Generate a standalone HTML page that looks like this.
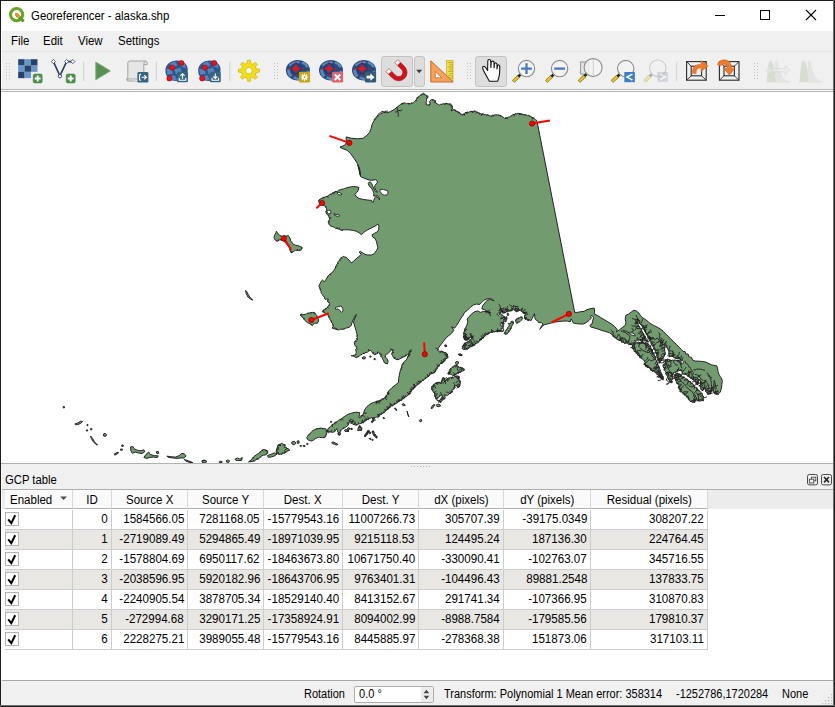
<!DOCTYPE html>
<html><head><meta charset="utf-8"><title>Georeferencer - alaska.shp</title>
<style>
*{box-sizing:border-box;margin:0;padding:0}
html,body{width:835px;height:707px;overflow:hidden;background:#fff}
body{position:relative;font-family:"Liberation Sans",sans-serif;font-size:12px;color:#000}
.abs{position:absolute}
#win{position:absolute;left:0;top:0;width:835px;height:707px;background:#f0f0f0;overflow:hidden}
#bT{left:0;top:0;width:835px;height:1px;background:#1c1c1c}
#bL{left:0;top:0;width:1px;height:707px;background:#1c1c1c}
#bR{left:833px;top:0;width:2px;height:707px;background:linear-gradient(90deg,#6e6e6e 0,#6e6e6e 40%,#1c1c1c 40%)}
#bB{left:0;top:705px;width:835px;height:2px;background:linear-gradient(180deg,#6e6e6e 0,#6e6e6e 40%,#1c1c1c 40%)}
#title{left:1px;top:1px;width:833px;height:30px;background:#fff}
#title .t{left:30px;top:8px;font-size:12px;white-space:nowrap;transform:scaleX(.951);transform-origin:0 50%}
#menu{left:2px;top:31px;width:832px;height:20px;background:#f0f0f0}
#menu span{position:absolute;margin-left:-1px;top:3px;font-size:12px;white-space:nowrap;transform:scaleX(.955);transform-origin:0 50%}
#tb{left:2px;top:51px;width:832px;height:39px;background:#f0f0f0;border-top:1px solid #e3e3e3}
#tbline{left:1px;top:89px;width:833px;height:3px;background:#fff;border-top:1px solid #b5b5b5;border-bottom:1px solid #b5b5b5}
#canvas{left:1px;top:92px;width:833px;height:372px;background:#fff;border-bottom:1px solid #b2b2b2}
#svgmap{position:absolute;left:0;top:0}
#split{left:1px;top:464px;width:833px;height:6px;background:#f0f0f0}
#docktitle{left:5px;top:473px;font-size:12px;white-space:nowrap;transform:scaleX(.94);transform-origin:0 50%}
#tbl{left:2px;top:489px;width:832px;height:192px;background:#fff;border-top:1px solid #b0b0b0;border-bottom:1px solid #a8a8a8}
#hdrbg{left:2px;top:490px;width:832px;height:19px;background:#ececec}
.hc{position:absolute;top:490px;height:19px;background:#fafafa;border-right:1px solid #d8d8d8;border-bottom:1px solid #b4b4b4;text-align:center;line-height:21px;font-size:12px;white-space:nowrap}
.hc span{display:inline-block;transform:scaleX(.96);transform-origin:50% 50%}
.row{position:absolute;left:5px;width:703px;height:20px;border-bottom:1px solid #cdcdcd}
.row.alt{background:#e9e7e3}
.c{position:absolute;top:0;height:19px;border-right:1px solid #cdcdcd;text-align:right;padding-right:3px;line-height:19px;font-size:12px;white-space:nowrap}
.c span{display:inline-block;transform:scaleX(.965);transform-origin:100% 50%}
.cb{position:absolute;left:0px;top:2px;width:14px;height:14px;border:1px solid #b5b5b5;background:#fff}
#status{left:1px;top:681px;width:833px;height:24px;background:#f0f0f0}
#status span{position:absolute;top:6px;font-size:12px;white-space:nowrap;transform:scaleX(.915);transform-origin:0 50%}
#spin{left:354px;top:686px;width:80px;height:17px;background:#fff;border:1px solid #adadad;border-radius:2px}
</style></head><body>
<div id="win">
<div class="abs" style="left:1px;top:1px;width:1px;height:704px;background:#fff"></div>
<div id="title" class="abs"><span class="abs t">Georeferencer - alaska.shp</span></div>
<div id="menu" class="abs"><span style="left:10px">File</span><span style="left:42px">Edit</span><span style="left:77px">View</span><span style="left:117px">Settings</span></div>
<div id="tb" class="abs"></div>
<div id="tbline" class="abs"></div>
<div id="canvas" class="abs"></div>
<div id="split" class="abs"></div>
<div id="docktitle" class="abs">GCP table</div>
<div id="tbl" class="abs"></div>
<div id="hdrbg" class="abs"></div>
<div class="hc" style="left:5px;width:68px;text-align:left;padding-left:5px"><span style="transform-origin:0 50%">Enabled</span></div>
<div class="hc" style="left:73px;width:39px"><span>ID</span></div>
<div class="hc" style="left:112px;width:76px"><span>Source X</span></div>
<div class="hc" style="left:188px;width:76px"><span>Source Y</span></div>
<div class="hc" style="left:264px;width:79px"><span>Dest. X</span></div>
<div class="hc" style="left:343px;width:76px"><span>Dest. Y</span></div>
<div class="hc" style="left:419px;width:85px"><span>dX (pixels)</span></div>
<div class="hc" style="left:504px;width:87px"><span>dY (pixels)</span></div>
<div class="hc" style="left:591px;width:117px"><span>Residual (pixels)</span></div>
<div class="row" style="top:510px"><div class="c" style="left:0;width:68px"><div class="cb"></div></div><div class="c" style="left:68px;width:39px"><span>0</span></div><div class="c" style="left:107px;width:76px"><span>1584566.05</span></div><div class="c" style="left:183px;width:76px"><span>7281168.05</span></div><div class="c" style="left:259px;width:79px"><span>-15779543.16</span></div><div class="c" style="left:338px;width:76px"><span>11007266.73</span></div><div class="c" style="left:414px;width:85px"><span>305707.39</span></div><div class="c" style="left:499px;width:87px"><span>-39175.0349</span></div><div class="c" style="left:586px;width:117px"><span>308207.22</span></div></div>
<div class="row alt" style="top:530px"><div class="c" style="left:0;width:68px"><div class="cb"></div></div><div class="c" style="left:68px;width:39px"><span>1</span></div><div class="c" style="left:107px;width:76px"><span>-2719089.49</span></div><div class="c" style="left:183px;width:76px"><span>5294865.49</span></div><div class="c" style="left:259px;width:79px"><span>-18971039.95</span></div><div class="c" style="left:338px;width:76px"><span>9215118.53</span></div><div class="c" style="left:414px;width:85px"><span>124495.24</span></div><div class="c" style="left:499px;width:87px"><span>187136.30</span></div><div class="c" style="left:586px;width:117px"><span>224764.45</span></div></div>
<div class="row" style="top:550px"><div class="c" style="left:0;width:68px"><div class="cb"></div></div><div class="c" style="left:68px;width:39px"><span>2</span></div><div class="c" style="left:107px;width:76px"><span>-1578804.69</span></div><div class="c" style="left:183px;width:76px"><span>6950117.62</span></div><div class="c" style="left:259px;width:79px"><span>-18463673.80</span></div><div class="c" style="left:338px;width:76px"><span>10671750.40</span></div><div class="c" style="left:414px;width:85px"><span>-330090.41</span></div><div class="c" style="left:499px;width:87px"><span>-102763.07</span></div><div class="c" style="left:586px;width:117px"><span>345716.55</span></div></div>
<div class="row alt" style="top:570px"><div class="c" style="left:0;width:68px"><div class="cb"></div></div><div class="c" style="left:68px;width:39px"><span>3</span></div><div class="c" style="left:107px;width:76px"><span>-2038596.95</span></div><div class="c" style="left:183px;width:76px"><span>5920182.96</span></div><div class="c" style="left:259px;width:79px"><span>-18643706.95</span></div><div class="c" style="left:338px;width:76px"><span>9763401.31</span></div><div class="c" style="left:414px;width:85px"><span>-104496.43</span></div><div class="c" style="left:499px;width:87px"><span>89881.2548</span></div><div class="c" style="left:586px;width:117px"><span>137833.75</span></div></div>
<div class="row" style="top:590px"><div class="c" style="left:0;width:68px"><div class="cb"></div></div><div class="c" style="left:68px;width:39px"><span>4</span></div><div class="c" style="left:107px;width:76px"><span>-2240905.54</span></div><div class="c" style="left:183px;width:76px"><span>3878705.34</span></div><div class="c" style="left:259px;width:79px"><span>-18529140.40</span></div><div class="c" style="left:338px;width:76px"><span>8413152.67</span></div><div class="c" style="left:414px;width:85px"><span>291741.34</span></div><div class="c" style="left:499px;width:87px"><span>-107366.95</span></div><div class="c" style="left:586px;width:117px"><span>310870.83</span></div></div>
<div class="row alt" style="top:610px"><div class="c" style="left:0;width:68px"><div class="cb"></div></div><div class="c" style="left:68px;width:39px"><span>5</span></div><div class="c" style="left:107px;width:76px"><span>-272994.68</span></div><div class="c" style="left:183px;width:76px"><span>3290171.25</span></div><div class="c" style="left:259px;width:79px"><span>-17358924.91</span></div><div class="c" style="left:338px;width:76px"><span>8094002.99</span></div><div class="c" style="left:414px;width:85px"><span>-8988.7584</span></div><div class="c" style="left:499px;width:87px"><span>-179585.56</span></div><div class="c" style="left:586px;width:117px"><span>179810.37</span></div></div>
<div class="row" style="top:630px"><div class="c" style="left:0;width:68px"><div class="cb"></div></div><div class="c" style="left:68px;width:39px"><span>6</span></div><div class="c" style="left:107px;width:76px"><span>2228275.21</span></div><div class="c" style="left:183px;width:76px"><span>3989055.48</span></div><div class="c" style="left:259px;width:79px"><span>-15779543.16</span></div><div class="c" style="left:338px;width:76px"><span>8445885.97</span></div><div class="c" style="left:414px;width:85px"><span>-278368.38</span></div><div class="c" style="left:499px;width:87px"><span>151873.06</span></div><div class="c" style="left:586px;width:117px"><span>317103.11</span></div></div>
<div id="status" class="abs"><span style="left:303px">Rotation</span><span style="left:443px">Transform: Polynomial 1 Mean error: 358314</span><span style="left:675px">-1252786,1720284</span><span style="left:781px">None</span></div>
<div id="spin" class="abs"><span class="abs" style="left:4px;top:0px;font-size:12px;transform:scaleX(.92);transform-origin:0 50%;white-space:nowrap">0.0 °</span></div>
<svg id="svgmap" width="835" height="707" viewBox="0 0 835 707">
<defs><clipPath id="cc"><rect x="1" y="92" width="833" height="371"/></clipPath></defs>
<g clip-path="url(#cc)">
<g fill="#729b6f" stroke="#232323" stroke-width="1" stroke-linejoin="round">
<path d="M423.4,93.2 L424.3,94.0 L425.1,95.0 L426.2,95.2 L427.2,95.7 L428.0,96.5 L427.8,97.6 L426.7,98.2 L426.5,99.4 L426.5,100.6 L426.3,101.8 L425.8,103.0 L426.4,104.1 L427.3,105.1 L428.7,104.9 L430.1,104.4 L430.0,102.9 L429.4,101.5 L430.0,100.7 L430.9,100.1 L431.6,99.4 L433.0,99.9 L434.5,100.1 L435.2,100.9 L435.2,102.2 L435.9,103.0 L437.0,103.9 L438.3,104.4 L439.5,105.1 L440.6,104.3 L442.0,104.3 L443.1,103.7 L444.6,104.0 L446.0,103.4 L447.5,103.7 L448.7,103.9 L449.9,103.9 L451.1,104.4 L451.7,105.3 L452.3,106.2 L452.5,107.3 L452.4,108.4 L451.5,109.2 L451.1,110.2 L452.5,110.0 L453.9,109.5 L455.0,110.1 L456.0,110.7 L456.8,111.6 L458.0,111.8 L459.0,112.4 L460.0,113.1 L461.0,114.1 L462.0,115.2 L463.1,114.6 L464.0,113.7 L464.9,112.8 L466.1,112.4 L467.3,112.2 L468.6,112.4 L469.7,111.7 L470.9,111.6 L472.1,111.4 L473.4,111.8 L474.5,111.0 L475.7,111.2 L476.8,112.0 L478.0,112.6 L479.2,113.1 L480.5,113.6 L481.7,114.2 L483.0,113.7 L484.1,114.7 L485.3,114.5 L486.6,114.8 L487.8,115.0 L489.0,115.5 L490.1,116.0 L491.4,116.0 L492.5,115.3 L493.8,115.3 L494.9,114.9 L496.1,114.8 L497.4,114.9 L498.6,115.1 L499.8,115.2 L501.1,115.8 L502.1,116.8 L503.5,117.3 L504.6,118.4 L505.7,117.8 L507.1,118.0 L508.2,117.2 L509.4,116.9 L510.6,116.1 L511.9,115.5 L513.0,114.5 L514.3,114.6 L515.3,113.6 L516.6,113.8 L517.8,113.3 L519.0,113.3 L520.2,113.9 L521.4,114.0 L522.6,114.3 L523.8,114.5 L525.0,114.9 L526.3,114.8 L527.4,115.6 L528.7,115.4 L529.8,116.0 L531.0,116.6 L532.1,117.6 L533.6,117.8 L534.6,118.8 L535.3,119.7 L536.5,120.2 L537.0,121.2 L574.7,312.4 L577.6,312.4 L580.5,311.7 L584.1,311.4 L587.0,309.6 L590.6,308.6 L594.2,308.1 L594.6,311.0 L594.2,313.9 L597.1,315.3 L600.7,317.5 L604.3,319.7 L607.9,321.8 L611.5,324.0 L615.1,326.9 L617.3,329.8 L616.5,331.9 L619.4,329.8 L622.3,327.6 L625.2,325.4 L625.9,322.6 L625.2,318.9 L625.9,315.3 L628.8,313.9 L631.7,311.7 L633.9,310.3 L636.3,310.9 L639.0,313.1 L640.6,315.8 L642.8,317.9 L645.5,319.6 L648.2,321.7 L650.9,323.9 L653.6,325.5 L656.3,326.6 L659.0,328.2 L661.6,329.8 L663.8,331.9 L666.0,334.1 L668.1,336.3 L670.8,338.9 L673.5,341.6 L676.2,344.3 L678.9,347.0 L681.6,349.7 L683.2,351.6 L685.0,351.4 L685.7,354.0 L688.1,354.1 L688.9,356.9 L691.5,357.4 L692.6,360.0 L695.1,361.1 L697.8,361.1 L700.5,361.3 L703.1,361.6 L705.8,362.1 L708.0,363.2 L711.8,364.9 L715.1,365.5 L716.7,365.8 L717.6,368.2 L717.9,371.2 L718.8,374.2 L720.3,376.6 L721.8,379.0 L722.4,381.4 L721.8,384.4 L721.5,387.9 L720.6,390.9 L720.4,392.1 L719.5,392.6 L718.8,393.3 L718.4,394.2 L717.4,394.1 L716.7,394.5 L715.9,394.0 L714.9,393.9 L714.5,393.2 L714.0,392.4 L713.7,391.5 L712.9,391.0 L713.3,389.7 L712.5,389.1 L711.8,388.8 L711.6,387.9 L711.9,388.8 L711.0,389.1 L711.4,389.9 L711.6,390.7 L711.3,391.5 L710.6,392.2 L710.7,393.1 L710.7,393.9 L709.9,393.7 L709.2,394.2 L708.4,393.9 L707.8,393.3 L707.0,392.8 L706.2,392.1 L705.7,391.4 L705.5,390.6 L705.4,389.8 L705.0,388.7 L704.2,387.9 L703.6,388.7 L703.4,389.6 L703.0,390.4 L702.1,390.6 L701.8,389.8 L700.8,389.1 L700.6,387.9 L700.9,387.1 L699.9,386.4 L700.3,385.6 L700.5,384.5 L699.9,383.6 L700.1,382.6 L700.6,381.6 L699.9,380.5 L700.3,379.6 L700.5,378.6 L699.5,377.8 L700.0,376.9 L699.1,376.4 L699.1,375.4 L698.7,375.9 L698.0,376.0 L698.3,377.0 L697.9,378.1 L698.1,379.0 L698.5,379.8 L698.3,380.8 L698.5,381.7 L698.7,382.5 L698.4,383.5 L698.1,384.1 L697.7,384.7 L697.3,383.5 L696.1,383.2 L695.8,382.0 L695.1,381.2 L694.0,380.8 L693.5,380.0 L692.9,379.5 L692.2,379.0 L691.4,378.4 L690.4,378.0 L689.8,377.2 L689.0,376.8 L688.5,375.9 L687.5,375.9 L686.8,375.4 L686.0,374.5 L685.0,374.2 L683.8,374.2 L682.9,374.0 L682.0,373.6 L682.2,372.6 L682.8,371.7 L681.9,371.5 L681.5,370.8 L681.1,370.0 L680.4,370.6 L679.4,370.3 L678.6,370.9 L677.7,370.9 L677.0,371.6 L676.1,371.7 L675.2,372.5 L674.0,372.1 L673.2,372.8 L673.5,373.8 L672.8,374.5 L672.8,375.5 L673.2,376.6 L672.5,377.6 L672.2,378.6 L672.4,379.7 L671.7,380.4 L672.2,381.4 L672.0,382.3 L671.5,383.0 L670.6,382.3 L670.4,381.1 L669.4,380.5 L668.5,379.7 L668.1,378.6 L667.6,377.7 L667.6,376.4 L666.9,375.5 L666.3,374.6 L665.7,373.6 L666.0,372.3 L665.4,371.4 L664.8,370.4 L663.9,369.6 L664.4,368.2 L663.5,367.3 L663.1,366.2 L663.2,365.2 L663.7,364.4 L664.4,363.7 L665.3,363.5 L665.6,362.7 L666.1,362.1 L665.1,361.2 L665.2,360.0 L666.3,359.8 L667.4,359.2 L668.6,359.5 L669.6,359.9 L670.6,360.3 L671.7,360.4 L672.8,360.0 L673.8,360.4 L674.9,359.8 L675.9,360.5 L677.0,360.4 L678.1,360.2 L679.0,360.9 L680.1,360.9 L681.1,361.2 L682.4,361.1 L683.2,362.1 L682.1,361.8 L681.6,360.9 L681.1,360.0 L680.3,359.8 L679.7,358.8 L678.7,358.7 L677.8,358.7 L676.9,358.6 L676.0,358.4 L675.1,358.2 L674.4,357.4 L673.5,357.2 L672.7,356.6 L671.9,356.2 L670.7,356.3 L669.8,355.4 L669.8,356.2 L669.6,357.1 L669.2,356.1 L669.3,355.0 L668.7,354.0 L668.8,353.0 L669.0,352.0 L668.8,350.9 L668.4,350.0 L668.0,349.0 L667.1,348.2 L666.7,347.1 L666.4,346.0 L665.9,345.1 L664.6,344.8 L664.7,343.4 L663.6,343.0 L662.6,342.6 L662.3,341.4 L661.6,340.5 L660.7,340.0 L660.2,339.7 L659.8,340.0 L660.2,341.0 L660.9,341.8 L662.3,341.9 L662.6,343.1 L662.7,344.1 L663.4,344.7 L664.6,345.0 L664.7,346.0 L665.3,347.0 L664.4,348.0 L664.8,349.0 L664.6,350.0 L664.8,351.0 L664.8,352.0 L665.2,352.9 L665.2,353.9 L665.1,355.0 L664.3,355.7 L664.0,356.8 L663.1,357.2 L663.0,358.4 L662.2,358.9 L661.5,359.6 L661.1,360.4 L660.7,361.3 L659.9,362.0 L659.8,363.1 L658.9,362.6 L659.1,361.6 L658.6,361.0 L657.7,360.1 L658.1,358.8 L657.3,357.9 L657.1,356.8 L656.6,355.7 L656.9,354.4 L656.1,353.5 L655.8,352.4 L655.3,351.4 L655.1,350.2 L654.2,349.5 L653.8,348.5 L653.7,347.4 L652.9,346.6 L652.7,345.5 L651.6,344.9 L651.0,344.1 L651.2,342.8 L650.7,341.9 L649.9,341.2 L649.8,340.6 L649.6,340.0 L649.1,339.2 L649.1,338.2 L647.9,337.9 L647.9,336.9 L647.8,335.7 L647.1,334.8 L646.2,334.1 L645.8,333.1 L645.3,332.1 L644.9,331.1 L644.4,330.2 L643.7,329.3 L642.7,328.8 L642.8,327.6 L642.5,326.6 L641.8,325.9 L641.2,325.1 L640.5,324.2 L639.5,323.5 L639.3,322.3 L638.7,321.4 L638.3,320.5 L637.1,320.3 L637.0,319.3 L636.3,319.4 L636.1,320.1 L636.1,321.2 L637.4,321.6 L637.9,322.4 L638.0,323.4 L638.2,324.3 L638.5,325.3 L638.9,326.2 L639.6,326.9 L639.9,327.8 L640.8,328.5 L641.7,329.0 L641.3,330.4 L641.7,331.2 L642.3,332.0 L643.1,332.7 L643.5,333.5 L643.8,334.5 L643.9,335.5 L644.9,336.0 L645.4,336.9 L645.4,338.0 L646.4,338.6 L647.0,339.3 L647.5,340.2 L647.6,341.3 L648.5,341.9 L647.7,341.7 L647.1,341.0 L646.2,341.5 L645.3,340.8 L644.3,340.9 L643.3,341.1 L642.5,340.7 L641.5,341.2 L640.8,340.6 L639.8,339.9 L638.7,340.2 L637.5,340.1 L636.6,340.8 L635.7,341.2 L634.9,341.9 L634.5,342.8 L633.7,343.2 L632.8,343.6 L632.3,344.4 L631.4,344.5 L630.7,345.0 L630.1,344.1 L628.9,344.6 L628.2,343.8 L627.5,343.1 L626.5,343.0 L625.5,343.3 L624.5,343.3 L623.7,342.5 L622.9,342.2 L621.7,342.1 L621.3,340.7 L620.2,340.6 L619.3,340.6 L618.7,339.8 L618.0,339.5 L616.8,339.3 L616.5,337.8 L615.1,337.9 L614.4,337.0 L613.3,336.6 L613.0,335.5 L612.2,334.8 L609.3,332.6 L605.7,331.6 L602.1,330.5 L597.8,329.0 L594.2,327.9 L590.6,326.9 L589.9,325.4 L592.0,324.0 L592.7,321.1 L593.5,317.5 L592.0,315.3 L590.6,316.1 L591.3,318.2 L589.1,320.4 L586.2,322.6 L583.4,324.0 L579.8,324.0 L576.2,323.6 L573.3,323.0 L572.5,321.1 L571.1,318.9 L570.4,321.8 L567.5,321.1 L563.2,321.1 L558.9,321.5 L554.5,322.1 L550.9,323.0 L547.3,324.0 L544.4,324.7 L542.3,326.2 L539.8,329.3 L541.5,326.2 L543.0,324.0 L541.5,322.6 L538.6,322.6 L538.0,321.1 L537.1,320.6 L535.3,319.4 L534.7,316.4 L534.4,313.7 L533.5,315.8 L532.3,318.2 L531.1,320.6 L529.3,319.9 L526.3,318.8 L525.6,318.6 L524.9,318.3 L524.5,317.6 L524.4,316.8 L524.8,316.0 L524.5,315.2 L525.2,314.7 L525.6,314.2 L525.7,313.4 L524.9,313.6 L524.1,313.4 L523.3,313.4 L523.1,312.4 L522.3,312.0 L521.5,311.6 L521.5,310.7 L520.7,310.4 L520.3,309.8 L520.0,310.5 L519.1,310.5 L518.5,311.0 L517.7,310.9 L517.0,311.7 L516.1,311.6 L515.9,310.8 L515.0,310.7 L514.6,310.1 L514.3,309.2 L515.2,308.5 L515.1,307.7 L515.1,306.7 L514.5,306.1 L513.9,306.6 L513.6,307.2 L513.5,308.0 L513.1,308.7 L513.0,309.6 L512.5,310.4 L511.7,310.7 L510.8,311.0 L509.9,311.0 L509.1,310.8 L508.4,311.4 L507.5,311.1 L506.8,311.9 L506.0,311.9 L505.4,312.5 L504.4,312.5 L504.2,313.4 L503.3,312.9 L502.4,313.1 L502.0,312.3 L501.4,311.6 L501.5,310.7 L500.8,309.9 L500.9,308.9 L500.9,308.0 L500.6,308.4 L500.2,308.3 L499.9,309.2 L500.1,310.1 L500.3,311.0 L500.2,311.8 L500.5,312.6 L500.7,313.4 L501.0,314.2 L501.5,314.9 L502.1,315.1 L502.8,315.3 L503.3,315.8 L503.8,316.5 L504.8,316.7 L504.5,317.4 L504.6,318.2 L504.6,319.0 L504.2,319.7 L504.1,320.6 L504.1,321.4 L503.6,322.1 L503.7,322.9 L504.0,323.8 L503.5,324.6 L503.3,325.3 L503.5,326.2 L503.1,326.9 L503.1,327.7 L503.0,328.6 L503.3,329.3 L503.9,329.8 L503.6,330.7 L503.0,331.4 L502.0,331.6 L501.2,331.0 L500.4,331.3 L499.6,331.5 L498.8,331.3 L498.0,331.7 L497.2,331.8 L496.4,331.6 L495.6,331.5 L494.9,332.2 L494.1,331.6 L493.4,331.9 L492.7,332.3 L491.8,331.9 L491.2,332.5 L490.4,332.5 L489.5,333.0 L488.5,333.4 L488.0,334.3 L487.2,334.7 L486.2,334.7 L485.5,335.1 L485.2,335.9 L484.5,336.2 L484.1,336.9 L483.5,337.4 L483.2,338.1 L482.5,338.5 L481.9,339.0 L481.3,339.7 L480.3,339.8 L479.8,340.7 L479.0,341.2 L478.5,342.0 L477.9,342.6 L477.2,343.3 L476.2,343.4 L475.3,343.7 L474.9,344.7 L474.2,345.2 L473.3,345.5 L472.7,346.1 L471.7,345.9 L471.2,346.7 L470.4,347.0 L469.5,347.3 L468.8,348.1 L467.8,348.4 L467.2,349.3 L466.0,349.1 L465.3,349.9 L464.6,349.3 L463.7,349.4 L462.9,349.1 L462.4,348.3 L462.7,347.3 L462.0,346.5 L462.9,346.2 L463.1,345.4 L463.8,345.0 L463.9,344.1 L464.4,343.3 L465.3,343.2 L465.9,342.6 L466.8,342.6 L467.4,342.1 L468.1,341.7 L468.9,341.6 L469.4,340.9 L469.7,340.1 L470.8,339.8 L471.1,339.0 L471.4,338.3 L471.1,337.3 L472.3,336.8 L472.1,335.9 L471.7,336.5 L471.0,336.7 L470.4,336.9 L469.8,337.6 L469.0,338.1 L469.0,339.2 L468.2,339.8 L467.5,340.0 L466.7,339.9 L466.1,340.5 L465.4,340.0 L464.7,339.7 L464.4,338.9 L463.9,338.3 L463.6,337.4 L463.4,336.5 L464.1,335.5 L463.5,334.7 L463.8,333.8 L463.7,332.9 L464.2,332.0 L464.3,331.1 L464.6,330.4 L464.3,329.5 L465.0,328.9 L465.3,328.2 L466.8,325.3 L467.8,321.7 L467.2,318.9 L468.9,316.7 L471.8,313.8 L474.7,311.6 L477.6,310.9 L480.5,312.4 L483.4,311.4 L487.0,311.6 L487.9,311.7 L488.6,312.7 L489.7,312.4 L490.6,312.8 L489.7,312.6 L489.0,312.3 L488.4,311.6 L485.5,310.2 L481.9,308.8 L482.6,305.9 L484.8,303.0 L487.0,300.4 L490.6,299.4 L494.2,300.8 L490.6,298.6 L487.0,298.9 L484.1,300.1 L481.9,302.3 L479.8,304.4 L476.2,304.1 L473.3,305.1 L470.4,307.3 L467.5,310.2 L464.6,312.4 L463.2,315.2 L461.0,318.1 L458.9,321.7 L456.7,325.3 L454.5,328.2 L451.6,326.8 L453.8,330.4 L451.6,333.3 L448.0,336.2 L445.1,339.0 L443.0,341.9 L440.8,344.8 L438.6,347.7 L438.2,348.6 L438.1,349.6 L437.9,350.6 L438.6,350.9 L439.3,351.2 L440.1,351.3 L441.1,351.2 L441.9,351.5 L442.8,351.8 L443.7,352.0 L444.4,352.4 L445.3,352.3 L446.0,352.8 L446.6,353.5 L446.9,354.2 L447.5,354.8 L447.2,355.8 L448.0,356.4 L447.9,357.4 L447.2,358.0 L446.4,358.5 L445.9,359.2 L445.1,359.6 L445.0,360.6 L444.0,360.9 L443.8,361.8 L443.0,362.1 L442.5,363.0 L441.7,363.4 L440.7,363.6 L440.1,364.3 L439.3,364.8 L439.2,365.9 L438.2,366.2 L437.9,367.2 L437.2,367.7 L437.3,368.8 L436.2,369.1 L435.8,369.8 L435.8,370.8 L435.3,371.7 L434.6,372.4 L433.8,372.9 L432.9,373.4 L432.0,373.3 L431.4,373.7 L430.7,374.1 L430.0,374.4 L429.5,375.1 L429.0,375.8 L428.4,376.4 L427.7,377.0 L426.9,377.4 L426.0,377.8 L425.6,378.7 L424.8,379.1 L424.0,379.6 L423.5,380.4 L422.4,380.5 L421.9,381.3 L421.1,381.7 L420.5,382.4 L419.8,383.0 L419.0,383.5 L418.4,384.1 L417.4,384.2 L417.1,385.4 L416.2,385.6 L415.6,386.1 L414.8,386.5 L414.9,387.6 L414.0,387.8 L413.6,388.5 L413.2,389.2 L412.2,389.2 L411.8,390.0 L411.7,390.8 L411.0,391.4 L411.0,392.2 L410.4,392.8 L410.1,393.7 L409.2,393.8 L408.9,394.6 L408.2,395.0 L407.5,395.5 L407.0,396.3 L405.9,396.5 L405.3,397.2 L404.7,397.8 L403.9,398.3 L403.2,398.8 L402.4,399.3 L401.8,399.8 L401.2,400.4 L400.2,400.2 L399.6,400.8 L399.1,401.7 L397.9,401.6 L397.5,402.6 L396.7,402.9 L396.0,403.5 L395.0,403.7 L394.5,404.6 L393.8,405.1 L392.9,405.1 L392.3,405.8 L391.5,405.9 L390.9,406.5 L390.2,407.1 L389.2,407.3 L388.9,408.3 L388.0,408.7 L387.8,409.5 L386.7,409.5 L386.2,410.1 L385.9,410.9 L385.4,411.7 L384.5,412.1 L383.9,412.8 L383.0,413.0 L382.2,413.5 L381.6,414.2 L380.5,414.3 L380.1,415.2 L379.4,415.7 L378.9,416.6 L378.1,417.1 L377.2,417.4 L376.7,417.1 L376.1,417.0 L375.4,417.5 L374.6,417.7 L374.1,418.6 L373.9,419.5 L373.8,420.5 L373.2,421.3 L372.6,422.0 L372.1,422.8 L371.9,421.8 L372.7,421.1 L372.8,420.2 L372.9,419.5 L372.7,418.7 L373.2,418.1 L372.4,418.2 L371.7,417.7 L371.0,417.8 L370.4,418.4 L369.6,418.1 L369.0,418.6 L368.6,419.3 L367.8,419.5 L367.0,419.5 L366.5,420.0 L366.0,420.6 L365.3,420.9 L364.5,421.0 L364.1,421.7 L363.7,422.3 L363.1,422.7 L362.4,422.8 L361.6,423.1 L360.9,423.5 L360.2,423.5 L359.5,423.8 L358.5,423.9 L357.7,424.6 L356.9,424.8 L356.2,425.3 L355.4,424.9 L354.4,424.9 L354.0,424.3 L353.1,424.4 L352.6,423.8 L352.1,423.6 L351.5,423.5 L350.9,422.9 L350.8,422.0 L351.5,421.7 L351.9,421.0 L352.7,421.0 L353.3,421.7 L354.1,421.7 L353.6,420.9 L353.0,420.2 L351.2,419.9 L350.5,420.3 L349.7,420.6 L349.7,421.5 L349.0,422.0 L349.0,423.0 L348.6,423.8 L348.4,424.8 L347.6,425.3 L347.1,426.2 L346.1,426.7 L345.4,427.6 L344.3,427.8 L343.6,428.6 L342.5,428.9 L341.7,429.5 L341.1,430.3 L340.6,431.1 L340.0,431.8 L339.8,432.5 L340.2,433.1 L339.8,433.7 L339.6,434.3 L339.0,434.8 L338.4,434.0 L338.1,433.1 L338.3,432.2 L337.5,431.5 L337.7,430.6 L337.3,429.5 L336.9,428.5 L336.6,429.4 L336.0,430.1 L335.1,430.9 L334.4,431.8 L333.5,432.1 L332.7,432.4 L331.9,432.2 L331.1,431.9 L330.2,431.8 L329.3,432.1 L328.5,432.7 L327.7,432.0 L327.5,430.9 L326.8,430.1 L327.8,429.5 L328.1,428.5 L329.1,428.0 L329.7,427.0 L330.6,426.4 L331.4,425.9 L331.9,425.0 L332.6,424.3 L333.5,423.9 L334.3,423.2 L335.1,422.6 L335.9,422.0 L336.9,421.8 L337.6,420.9 L338.5,420.3 L339.4,419.7 L339.7,419.9 L340.0,419.9 L340.6,419.2 L341.6,418.8 L342.2,418.1 L344.3,416.6 L346.5,415.2 L348.6,414.1 L350.8,413.4 L353.0,412.7 L355.5,412.3 L358.0,412.3 L359.8,412.7 L359.5,414.5 L359.1,416.6 L359.5,417.4 L360.2,418.1 L360.6,417.6 L361.3,417.4 L360.9,416.5 L360.9,415.6 L361.8,415.6 L362.7,415.9 L362.5,415.1 L363.1,414.5 L363.2,413.7 L363.8,413.1 L363.8,412.3 L364.5,410.1 L365.6,408.3 L367.0,406.5 L368.8,405.1 L371.0,403.6 L373.2,402.6 L375.3,401.9 L376.2,402.0 L376.7,401.2 L377.5,401.1 L378.2,401.0 L379.0,401.0 L379.6,400.4 L380.6,400.3 L381.2,399.6 L381.8,399.0 L382.7,398.9 L383.5,398.7 L384.0,397.9 L384.9,397.9 L385.8,398.2 L385.7,397.3 L385.4,396.4 L386.1,396.2 L386.3,395.4 L386.9,395.0 L387.5,394.3 L387.6,393.4 L387.5,392.4 L388.4,391.8 L388.6,391.0 L392.0,387.6 L395.3,385.1 L398.4,382.6 L398.7,378.4 L399.5,374.2 L400.4,370.0 L401.1,368.8 L401.4,367.5 L401.7,366.2 L401.9,365.1 L402.5,364.2 L402.9,363.3 L403.8,362.2 L404.6,361.1 L405.6,360.6 L406.3,359.9 L406.8,358.9 L407.4,358.0 L407.5,356.9 L408.2,356.1 L408.6,355.0 L408.9,354.0 L409.7,353.2 L409.9,351.9 L410.9,350.9 L411.1,349.6 L410.4,350.5 L409.9,351.6 L408.9,352.4 L408.5,353.6 L407.4,354.3 L406.8,355.3 L405.7,355.5 L405.0,356.5 L403.9,356.8 L402.8,357.1 L402.0,357.8 L401.0,358.2 L400.0,358.6 L399.1,359.2 L398.1,359.7 L396.6,359.5 L395.2,358.9 L394.3,358.4 L393.8,357.5 L393.1,356.8 L392.7,355.8 L392.0,354.9 L391.6,353.9 L392.2,353.0 L392.4,351.9 L393.1,351.0 L392.2,350.0 L391.6,348.9 L391.2,350.1 L390.2,351.0 L389.4,352.1 L388.4,353.1 L387.3,353.9 L386.1,354.4 L385.1,355.3 L385.4,356.4 L385.8,357.4 L386.6,358.2 L387.3,359.1 L387.8,360.0 L388.0,361.1 L387.9,362.6 L387.3,364.0 L386.3,363.4 L385.1,363.3 L384.1,362.4 L383.7,361.1 L383.3,360.1 L382.7,359.2 L382.3,358.2 L381.8,357.2 L381.0,356.4 L380.8,355.3 L380.2,354.3 L379.5,353.4 L378.6,352.4 L377.6,353.3 L376.5,353.9 L375.4,354.3 L374.3,354.6 L373.7,353.8 L372.9,353.2 L372.2,352.4 L371.6,351.6 L370.9,350.8 L370.0,350.3 L368.9,350.9 L367.9,351.8 L367.0,352.4 L366.0,352.5 L365.0,352.8 L364.1,353.5 L362.9,353.5 L362.1,354.3 L361.0,354.7 L360.1,355.3 L359.2,356.2 L358.2,356.6 L357.2,357.1 L356.4,357.9 L355.2,357.3 L354.2,356.4 L352.8,355.9 L351.3,355.7 L352.8,355.7 L354.1,355.0 L355.6,355.0 L355.9,353.5 L356.4,352.1 L355.9,350.7 L355.6,349.2 L356.6,348.3 L357.1,347.1 L356.0,346.4 L354.9,345.6 L354.7,344.2 L354.2,342.7 L354.9,341.5 L356.1,340.6 L356.7,339.7 L356.8,338.6 L357.5,337.7 L357.0,336.3 L357.2,334.8 L356.6,333.4 L356.4,331.9 L356.0,330.5 L355.6,329.0 L354.2,324.7 L353.5,321.8 L354.9,318.2 L356.4,314.3 L355.6,315.3 L353.5,318.9 L352.0,322.6 L351.3,325.4 L349.1,327.3 L345.5,328.3 L344.4,328.8 L343.2,329.3 L341.9,329.3 L340.7,329.1 L339.5,329.8 L338.3,329.8 L337.1,329.7 L335.9,329.1 L334.7,329.0 L333.7,328.5 L332.6,328.3 L332.6,327.4 L333.3,326.9 L333.0,325.4 L332.6,324.0 L332.2,323.0 L331.4,322.2 L331.1,321.1 L330.5,320.2 L329.9,319.3 L329.7,318.2 L329.0,317.3 L328.6,316.4 L328.2,315.3 L327.2,314.7 L326.4,313.8 L325.3,313.2 L324.3,312.6 L323.2,312.0 L322.4,311.0 L323.4,310.1 L324.6,309.6 L325.5,308.6 L326.8,308.1 L327.7,307.2 L328.2,306.0 L329.2,305.0 L329.7,303.8 L328.7,302.6 L327.5,301.6 L327.8,300.2 L328.2,298.8 L326.8,299.0 L325.3,299.5 L324.6,298.7 L324.5,297.5 L323.9,296.6 L323.0,295.7 L322.5,294.6 L321.7,293.7 L321.0,292.6 L321.1,291.2 L320.3,290.1 L320.0,288.8 L319.6,287.6 L318.9,286.5 L319.1,285.2 L319.9,284.1 L320.3,282.9 L321.0,281.9 L321.5,280.8 L322.4,280.0 L323.6,280.9 L324.5,282.0 L325.2,280.7 L326.0,279.4 L326.7,278.1 L327.5,277.2 L328.0,276.0 L328.9,275.2 L329.7,274.4 L330.6,273.6 L331.7,273.0 L332.6,271.7 L333.9,270.9 L334.2,269.8 L334.9,269.0 L335.3,268.0 L335.6,266.7 L336.3,265.6 L336.8,264.4 L337.5,263.5 L337.7,262.4 L338.2,261.5 L339.0,260.6 L339.9,259.8 L340.4,258.6 L341.2,257.7 L342.3,257.1 L343.3,256.4 L344.7,257.0 L346.2,257.2 L349.0,260.1 L351.2,262.9 L353.4,261.5 L356.2,258.6 L359.1,256.4 L361.3,254.3 L359.1,252.1 L360.6,251.4 L362.7,252.8 L364.9,254.3 L367.8,255.0 L371.4,255.0 L374.3,253.6 L376.4,250.7 L377.9,247.8 L377.2,244.9 L376.4,241.3 L375.0,238.4 L372.8,237.0 L372.1,234.8 L374.3,233.4 L377.2,231.9 L378.6,229.8 L379.0,226.2 L377.9,224.0 L375.0,226.2 L372.1,227.6 L369.2,229.0 L366.4,230.5 L363.5,232.7 L361.3,234.8 L359.1,232.7 L356.2,231.2 L353.4,230.5 L349.0,229.8 L344.7,229.8 L343.5,229.8 L342.3,230.3 L341.1,230.2 L339.8,229.3 L338.2,229.0 L337.1,228.4 L335.7,228.4 L334.6,227.6 L333.4,227.0 L332.3,226.5 L331.0,226.2 L329.7,225.3 L328.9,224.0 L328.6,222.9 L328.1,221.8 L328.9,220.8 L329.6,219.7 L329.5,218.1 L328.9,216.8 L328.3,215.6 L327.4,214.6 L326.5,213.6 L326.0,212.4 L325.9,211.2 L326.7,210.1 L326.7,208.8 L326.1,207.9 L325.7,206.9 L325.2,206.0 L324.0,205.6 L322.9,204.8 L321.6,204.5 L320.7,203.7 L319.8,203.0 L318.8,202.4 L318.5,201.3 L318.8,200.2 L319.8,199.4 L320.9,198.8 L322.1,198.3 L323.2,197.5 L324.5,197.3 L325.7,196.6 L327.1,196.5 L328.1,195.6 L329.3,194.9 L330.5,194.2 L331.7,193.7 L332.7,192.9 L334.0,192.8 L334.8,191.8 L336.1,191.5 L337.6,191.2 L338.8,190.1 L340.4,189.8 L341.8,189.1 L343.3,189.1 L344.7,188.4 L349.0,187.2 L353.4,186.5 L357.0,186.9 L358.9,187.5 L358.4,190.1 L357.0,192.3 L354.8,194.4 L356.2,196.6 L359.1,198.5 L363.5,199.5 L369.8,200.3 L371.6,200.3 L372.2,202.1 L373.1,202.5 L373.8,200.3 L374.6,198.1 L375.8,196.7 L377.5,197.0 L378.7,198.5 L379.5,199.8 L379.2,197.8 L378.0,196.1 L376.6,195.4 L375.1,196.0 L373.6,196.1 L373.9,193.6 L373.4,192.2 L372.8,190.4 L371.7,188.7 L370.4,187.2 L369.0,185.5 L368.3,183.6 L369.0,182.2 L370.7,182.2 L371.7,183.6 L372.6,185.7 L373.5,188.1 L374.6,190.2 L375.9,191.8 L377.2,192.1 L376.4,190.8 L375.1,188.9 L374.6,187.2 L375.1,185.4 L376.4,183.6 L377.5,182.1 L377.2,180.9 L375.8,179.7 L373.9,180.0 L371.0,180.3 L368.0,179.7 L365.0,178.5 L362.0,177.3 L360.5,176.4 L360.2,171.6 L359.3,168.0 L357.8,165.0 L360.2,175.3 L359.5,169.3 L357.3,163.3 L354.2,158.5 L350.6,153.7 L347.0,150.1 L343.4,148.9 L340.5,147.7 L340.0,147.0 L344.3,145.5 L346.5,142.7 L346.1,136.9 L351.5,138.3 L357.3,138.8 L363.1,138.3 L366.7,135.4 L369.6,132.6 L371.0,128.9 L372.0,124.6 L373.9,121.0 L376.8,117.4 L379.7,114.5 L383.3,112.4 L386.9,112.8 L390.5,111.6 L394.1,109.5 L397.0,107.3 L400.6,104.4 L401.7,103.6 L403.0,103.3 L404.2,102.7 L405.3,103.2 L406.4,103.7 L407.8,103.3 L409.2,103.5 L410.7,103.7 L411.5,103.0 L412.7,102.9 L413.6,102.3 L414.6,101.4 L415.7,100.5 L416.4,99.4 L416.9,98.2 L417.9,97.4 L418.6,96.5 L419.7,95.9 L420.7,95.2 L421.5,94.3 L422.5,93.9Z"/>
<path d="M274.0,237.3 L274.5,235.9 L275.0,234.4 L276.0,232.9 L276.4,231.2 L277.2,232.5 L277.9,233.7 L279.0,234.5 L279.8,235.6 L281.2,235.9 L282.6,236.2 L284.1,235.8 L285.5,235.9 L287.0,236.0 L288.4,235.6 L289.1,236.9 L289.9,238.0 L290.4,239.4 L290.6,240.9 L291.9,242.2 L292.7,243.8 L294.2,244.5 L295.6,245.2 L297.4,245.6 L299.2,246.0 L300.7,246.7 L302.1,247.4 L301.8,248.5 L301.4,249.6 L300.0,250.2 L298.5,250.6 L297.1,250.2 L295.6,250.3 L294.4,250.8 L293.5,251.7 L292.4,252.1 L291.7,252.9 L290.8,252.1 L290.3,251.0 L289.8,249.6 L289.9,248.1 L288.6,246.8 L287.7,245.2 L286.4,243.9 L285.5,242.4 L284.0,241.5 L282.6,240.2 L281.2,240.0 L279.8,239.5 L278.8,240.5 L277.6,241.3 L276.4,240.9 L275.4,240.2 L274.5,238.9Z"/>
<path d="M245.6,290.4 L246.2,293.6 L248.0,297.2 L250.9,299.3 L252.8,300.1 L250.2,297.6 L248.3,294.7 L246.9,291.8Z"/>
<path d="M300.4,314.3 L302.1,314.3 L303.7,314.6 L305.2,314.4 L306.6,313.9 L308.0,313.2 L309.5,312.9 L310.9,312.7 L312.4,312.4 L313.9,312.5 L315.2,313.2 L315.8,314.4 L316.7,315.3 L317.2,316.9 L318.1,318.2 L318.5,319.6 L318.6,321.1 L318.0,322.2 L317.4,323.3 L316.0,323.2 L314.5,323.3 L313.5,324.4 L312.4,325.4 L311.2,324.8 L310.2,324.0 L308.8,323.2 L307.3,322.6 L306.1,321.6 L305.1,320.4 L304.0,319.1 L303.0,317.8 L302.2,316.9 L301.2,316.1 L300.7,315.3Z"/>
<path d="M407.1,411.1 L407.9,413.9 L408.8,416.9 L407.7,414.4Z"/>
<path d="M402.0,404.4 L403.7,403.5 L405.4,405.2 L403.4,405.9Z"/>
<path d="M504.2,333.7 L504.7,332.5 L505.4,331.3 L506.1,330.0 L507.2,328.9 L507.5,327.8 L508.5,327.0 L509.0,325.9 L509.4,324.9 L510.3,324.0 L510.8,322.9 L511.1,321.9 L511.9,321.1 L512.8,321.3 L513.5,321.8 L513.4,323.0 L513.1,324.1 L512.3,325.0 L511.8,326.1 L511.4,327.1 L511.1,328.2 L510.4,329.1 L510.2,330.1 L509.1,331.2 L508.4,332.5 L507.3,333.6 L506.0,334.3 L505.0,334.1Z"/>
<path d="M515.5,319.9 L516.4,319.1 L517.3,318.2 L518.6,318.1 L519.7,317.6 L520.9,317.0 L522.1,317.0 L522.2,317.9 L522.7,318.8 L521.9,319.7 L520.9,320.6 L519.9,321.7 L518.5,322.4 L517.5,322.8 L516.7,323.5 L516.3,322.6 L515.8,321.8 L515.8,320.8Z"/>
<path d="M505.2,319.1 L505.5,317.8 L506.1,316.7 L506.5,316.8 L506.9,317.1 L506.9,318.5 L506.6,319.9 L506.0,320.8 L505.8,321.9 L505.3,321.7 L505.0,321.3 L505.4,320.2Z"/>
<path d="M507.2,313.4 L508.1,313.1 L508.7,314.6 L508.1,315.8 L507.3,315.0Z"/>
<path d="M508.1,323.5 L509.0,323.2 L509.7,323.8 L508.7,324.3Z"/>
<path d="M524.8,318.5 L526.3,319.1 L526.2,319.5 L524.7,318.9Z"/>
<path d="M527.2,319.6 L529.0,320.2 L528.9,320.7 L527.1,320.1Z"/>
<path d="M306.7,437.3 L307.6,436.4 L308.0,435.2 L309.4,434.3 L310.5,433.1 L311.6,431.7 L313.0,430.6 L314.2,429.8 L315.5,429.3 L316.9,428.6 L318.4,428.5 L320.1,428.2 L321.8,428.1 L323.2,428.5 L324.7,428.5 L325.6,429.0 L326.4,429.7 L326.5,431.2 L326.8,432.7 L326.6,434.0 L326.0,435.2 L325.7,436.3 L325.1,437.3 L323.9,437.6 L322.6,437.7 L321.2,437.5 L319.7,437.3 L318.4,437.4 L317.2,437.7 L316.2,438.3 L315.1,438.5 L314.4,439.6 L313.4,440.2 L312.2,440.8 L310.9,440.9 L309.7,440.4 L308.4,440.2 L307.9,439.5 L307.1,438.9 L306.9,438.1Z"/>
<path d="M338.4,433.5 L339.2,432.2 L340.4,433.1 L340.2,434.8 L339.2,435.6 L338.4,434.8Z"/>
<path d="M357.7,430.7 L357.8,429.7 L358.3,428.8 L358.4,427.8 L358.6,427.0 L359.3,426.4 L359.5,425.6 L360.2,426.1 L360.9,426.7 L361.2,427.5 L361.6,428.2 L362.0,428.9 L361.5,429.7 L361.3,430.7 L360.4,430.5 L359.5,430.3 L358.6,430.6Z"/>
<path d="M330.5,421.4 L331.4,421.3 L331.5,422.3 L330.7,422.4Z"/>
<path d="M345.3,430.1 L346.9,429.8 L348.6,430.6 L347.1,431.1Z"/>
<path d="M348.2,428.1 L349.5,428.0 L349.6,429.0 L348.4,429.1Z"/>
<path d="M350.7,428.6 L351.8,428.5 L352.0,429.5 L351.0,429.6Z"/>
<path d="M364.5,436.5 L364.8,435.8 L365.0,435.1 L365.4,434.5 L365.7,433.8 L366.6,433.5 L366.8,432.6 L367.4,432.0 L367.5,431.0 L368.3,430.5 L368.8,430.4 L369.1,430.9 L369.0,431.6 L368.2,432.0 L368.3,432.8 L367.8,433.3 L367.5,434.0 L367.0,434.4 L366.5,435.1 L365.8,435.7 L365.5,436.5 L365.0,436.3Z"/>
<path d="M368.5,432.5 L369.9,431.8 L371.0,432.9 L369.7,433.9Z"/>
<path d="M372.2,432.5 L372.2,431.7 L372.9,431.2 L373.5,431.2 L373.7,431.8 L374.0,432.5 L373.9,433.3 L374.3,433.9 L374.5,434.7 L375.5,434.7 L375.8,435.4 L376.4,436.0 L376.9,436.7 L377.2,437.5 L376.7,437.7 L376.5,438.1 L375.9,437.6 L375.5,437.0 L375.0,436.4 L374.4,435.9 L373.8,435.4 L373.3,434.8 L373.1,434.0 L372.5,433.3Z"/>
<path d="M369.2,438.6 L370.3,438.1 L371.1,439.0 L370.1,439.6Z"/>
<path d="M371.7,439.6 L372.6,439.1 L373.3,440.1 L372.3,440.6Z"/>
<path d="M347.2,428.9 L348.6,427.8 L349.7,428.9 L348.6,430.0Z"/>
<path d="M350.8,428.5 L351.9,428.2 L352.4,429.2 L351.4,429.6Z"/>
<path d="M344.3,430.3 L346.1,429.6 L347.9,430.7 L349.0,431.4 L346.9,431.6 L345.1,431.4Z"/>
<path d="M394.4,408.3 L395.4,408.0 L397.0,410.1 L396.2,410.5Z"/>
<path d="M382.9,417.7 L384.0,417.4 L384.8,418.4 L383.7,418.8Z"/>
<path d="M300.0,445.6 L301.5,445.6 L301.5,446.2 L300.0,446.2Z"/>
<path d="M303.2,445.4 L304.9,445.6 L305.0,446.6 L303.4,446.4Z"/>
<path d="M306.5,443.7 L307.7,443.4 L308.1,444.2 L306.9,444.6Z"/>
<path d="M276.3,452.0 L276.2,451.0 L276.5,450.1 L276.6,449.2 L277.2,448.4 L277.4,447.5 L277.7,446.6 L277.8,445.7 L278.1,444.8 L279.1,444.8 L280.0,444.3 L280.8,443.9 L281.7,443.5 L282.7,443.6 L283.5,444.4 L284.3,444.8 L285.3,444.8 L284.9,445.6 L285.0,446.7 L284.4,447.5 L285.4,447.4 L286.3,447.6 L287.0,448.5 L288.0,448.4 L288.7,448.9 L289.2,449.6 L289.8,450.2 L288.8,450.5 L287.9,450.8 L287.2,451.6 L286.2,452.0 L285.3,452.4 L284.5,453.1 L283.4,453.0 L282.6,453.8 L281.8,454.2 L280.8,454.2 L279.9,454.2 L279.0,454.7 L278.4,454.0 L277.8,453.2 L276.9,452.7Z"/>
<path d="M291.6,442.1 L294.3,441.2 L296.1,443.0 L294.3,444.8 L292.0,443.9Z"/>
<path d="M297.0,441.2 L298.8,440.7 L299.2,443.0 L297.5,443.4Z"/>
<path d="M248.5,461.9 L249.8,461.1 L250.9,460.1 L252.1,459.2 L252.8,457.8 L254.1,456.9 L254.8,455.6 L256.1,455.2 L257.1,454.1 L258.4,453.8 L259.7,452.4 L261.1,451.1 L262.3,450.1 L263.8,449.6 L265.6,450.1 L267.4,450.7 L267.5,451.8 L267.9,452.9 L266.7,453.9 L265.6,455.0 L263.7,455.1 L262.0,455.6 L260.6,456.9 L259.3,458.3 L258.2,459.0 L256.8,459.2 L255.7,460.1 L254.0,461.0 L252.1,461.5 L250.3,461.5Z"/>
<path d="M267.4,455.6 L270.9,454.3 L274.6,452.9 L277.2,453.8 L275.4,455.6 L271.9,456.8 L268.3,457.4Z"/>
<path d="M201.8,460.9 L203.9,460.1 L206.3,461.1 L205.4,462.8 L202.7,462.8Z"/>
<path d="M218.9,462.2 L220.7,461.1 L222.4,461.9 L221.2,462.9Z"/>
<path d="M226.1,460.9 L227.8,459.9 L229.6,460.8 L228.7,462.4 L226.6,462.2Z"/>
<path d="M235.0,459.2 L237.7,457.9 L239.9,459.2 L242.2,457.4 L241.7,460.4 L238.6,460.6 L235.9,460.4Z"/>
<path d="M331.7,442.7 L333.1,441.9 L335.6,443.1 L337.9,444.4 L336.9,445.1 L334.4,444.2 L332.3,443.6Z"/>
<path d="M63.2,406.5 L64.4,406.5 L64.4,407.9 L63.2,407.9Z"/>
<path d="M74.9,423.9 L77.8,423.0 L80.7,421.1 L82.6,421.5 L80.7,423.4 L77.8,424.5 L75.5,424.7Z"/>
<path d="M87.0,424.5 L87.9,424.5 L87.9,425.7 L87.0,425.7Z"/>
<path d="M86.4,429.9 L87.6,429.9 L87.6,431.0 L86.4,431.0Z"/>
<path d="M90.6,428.6 L91.8,428.6 L91.8,429.9 L90.6,429.9Z"/>
<path d="M90.6,436.0 L92.5,438.3 L94.5,441.8 L97.5,445.0 L96.0,444.6 L93.3,441.6 L91.2,438.3Z"/>
<path d="M103.3,434.1 L105.2,433.3 L106.7,434.9 L105.6,436.4 L103.7,436.0Z"/>
<path d="M121.8,445.0 L123.2,445.0 L123.2,446.4 L121.8,446.4Z"/>
<path d="M120.5,449.1 L122.4,449.1 L122.4,450.2 L120.5,450.2Z"/>
<path d="M114.2,454.0 L118.0,452.1 L118.4,453.1 L114.8,455.2Z"/>
<path d="M130.5,446.9 L132.8,446.4 L134.3,448.9 L137.2,450.2 L141.0,450.8 L143.9,449.8 L144.8,451.7 L142.0,453.6 L138.1,452.9 L135.3,452.1 L132.4,453.3 L130.9,450.8Z"/>
<path d="M143.9,457.5 L145.8,454.6 L148.7,452.1 L150.6,454.6 L154.4,455.6 L158.3,455.9 L157.3,457.5 L153.5,457.1 L149.6,457.5 L146.8,458.4Z"/>
<path d="M156.3,451.7 L158.3,451.4 L158.8,453.3 L156.9,453.6Z"/>
<path d="M166.9,456.1 L170.7,456.7 L175.5,457.1 L179.3,455.6 L181.2,453.6 L184.1,453.6 L186.0,455.9 L184.1,458.1 L181.2,457.9 L177.4,458.4 L172.6,457.9 L167.8,457.1Z"/>
<path d="M184.1,459.4 L187.0,460.4 L190.8,461.7 L192.8,462.7 L188.9,462.3 L185.7,460.9Z"/>
<path d="M202.3,461.3 L204.2,460.2 L206.7,461.3 L205.6,462.9 L203.3,462.9Z"/>
<path d="M362.1,357.9 L363.6,356.7 L365.7,357.3 L365.0,358.8 L363.0,359.0Z"/>
<path d="M369.6,356.2 L370.8,355.9 L371.1,357.0 L369.9,357.2Z"/>
<path d="M373.9,358.8 L375.1,358.5 L375.4,359.6 L374.2,359.8Z"/>
<path d="M444.7,345.1 L445.7,344.8 L446.0,346.0 L445.0,346.2Z"/>
<path d="M458.3,354.5 L460.3,354.0 L462.3,354.8 L462.0,355.6 L459.7,355.5Z"/>
<path d="M458.3,354.3 L460.1,354.0 L461.9,354.9 L460.0,355.5Z"/>
<path d="M445.0,345.4 L446.4,345.1 L446.7,346.5 L445.3,346.8Z"/>
<path d="M431.3,388.6 L431.6,387.6 L431.9,386.6 L432.6,385.7 L433.3,385.0 L434.1,384.4 L434.7,383.6 L435.6,383.3 L436.4,382.9 L437.2,382.3 L438.0,382.7 L438.9,382.3 L439.7,382.3 L440.3,383.0 L441.0,383.6 L441.1,382.8 L441.3,381.9 L441.4,381.1 L441.8,380.3 L442.3,379.5 L442.2,378.6 L443.1,378.1 L443.9,377.7 L444.2,378.8 L445.1,379.4 L445.1,380.2 L445.1,381.1 L444.7,381.9 L445.1,380.9 L446.0,380.2 L446.8,379.7 L447.2,378.7 L448.1,378.1 L449.0,378.2 L449.8,377.6 L450.6,377.3 L451.6,377.6 L452.6,377.1 L453.5,377.3 L454.3,376.7 L455.1,376.4 L456.0,376.5 L457.0,376.0 L458.1,376.0 L458.9,376.4 L459.1,377.2 L459.5,377.9 L459.0,378.8 L458.6,379.6 L459.3,380.1 L459.9,380.9 L460.7,381.3 L460.2,382.3 L460.3,383.4 L459.8,384.2 L459.9,385.0 L459.9,385.9 L459.2,386.7 L458.6,387.6 L457.9,386.8 L457.4,385.9 L456.5,385.7 L455.7,385.5 L454.8,385.5 L454.0,385.9 L455.0,386.5 L455.3,387.6 L454.3,388.2 L454.0,389.2 L453.2,389.3 L452.5,389.5 L451.9,390.1 L452.0,391.1 L452.8,391.8 L451.7,392.0 L451.1,393.0 L450.4,393.5 L449.5,393.6 L449.0,394.3 L448.1,394.8 L447.3,395.5 L446.4,395.6 L445.6,395.1 L445.0,395.6 L444.4,396.0 L445.2,396.6 L445.2,397.6 L444.9,398.4 L444.3,398.9 L443.5,399.3 L442.9,399.8 L442.2,400.3 L441.9,401.0 L441.1,401.7 L440.2,402.2 L439.7,401.7 L438.9,401.8 L438.9,401.0 L439.8,400.5 L439.8,399.7 L440.6,399.3 L441.1,398.5 L441.4,397.6 L442.4,397.1 L442.7,396.0 L442.6,395.3 L442.3,394.7 L441.3,395.1 L440.6,396.0 L439.5,396.3 L438.9,397.2 L438.4,397.8 L437.9,398.5 L437.2,398.9 L436.8,399.1 L436.4,399.3 L435.8,398.7 L435.7,398.0 L435.6,397.2 L435.5,396.4 L434.8,395.9 L434.7,395.1 L434.9,394.0 L434.3,393.0 L433.7,392.1 L433.1,391.4 L432.5,390.7 L431.8,390.1 L431.9,389.3Z"/>
<path d="M447.7,373.5 L448.3,372.9 L448.6,372.1 L449.3,371.5 L449.3,370.6 L449.9,369.7 L450.4,368.7 L451.4,368.1 L452.3,367.6 L453.0,366.8 L453.5,366.0 L454.4,365.9 L455.1,365.1 L456.0,365.1 L456.9,365.1 L457.3,366.1 L458.1,366.0 L458.4,366.8 L459.1,367.3 L459.4,368.1 L460.1,367.4 L461.1,367.2 L461.6,368.0 L462.6,367.9 L463.2,368.5 L464.1,369.1 L464.4,370.2 L463.7,370.7 L462.8,370.6 L462.1,371.3 L461.1,371.4 L460.7,372.2 L459.8,372.3 L459.0,372.1 L458.6,373.2 L457.7,373.1 L456.8,373.7 L456.0,374.4 L455.3,374.8 L454.7,375.2 L453.9,375.6 L453.1,375.5 L452.3,375.2 L451.5,374.6 L450.6,374.4 L449.8,374.1 L448.9,374.4 L448.3,374.0Z"/>
<path d="M455.2,362.6 L456.9,361.4 L458.6,362.0 L458.1,363.9 L456.5,364.7Z"/>
<path d="M431.0,408.1 L432.2,406.0 L433.9,404.3 L434.7,404.8 L433.5,406.9 L432.0,408.7Z"/>
<path d="M436.0,405.2 L437.7,404.2 L439.8,404.5 L440.6,405.9 L438.9,406.7 L436.8,406.4Z"/>
<path d="M419.2,420.7 L420.5,419.3 L421.7,419.8 L421.6,421.3 L420.1,421.8Z"/>
<path d="M634.1,343.1 L635.1,342.7 L636.1,343.1 L637.0,342.8 L637.8,342.3 L638.7,342.3 L639.5,342.6 L640.4,342.3 L641.2,343.0 L642.3,342.4 L643.3,342.7 L644.2,343.3 L645.2,343.1 L646.2,343.0 L647.3,343.2 L648.3,343.6 L648.5,344.8 L649.6,345.2 L650.3,345.9 L650.6,346.8 L650.8,347.8 L651.0,348.7 L651.2,349.7 L652.5,350.0 L652.5,351.1 L652.5,352.2 L653.4,353.0 L654.1,353.8 L654.2,354.9 L654.6,355.8 L655.4,356.6 L655.8,357.5 L655.7,358.6 L655.7,359.7 L656.6,360.5 L656.8,361.5 L657.1,362.4 L657.9,363.1 L657.4,364.2 L658.1,364.9 L658.4,365.8 L658.8,366.6 L659.2,367.4 L659.3,368.3 L659.6,369.1 L660.5,369.9 L659.9,371.1 L660.3,372.0 L660.9,372.9 L660.8,374.0 L661.5,375.0 L662.1,375.9 L662.1,377.0 L663.1,377.5 L663.2,378.4 L663.0,379.5 L663.6,380.1 L663.0,379.3 L662.2,378.6 L661.2,378.4 L660.2,377.9 L660.0,376.7 L659.0,376.3 L658.4,375.1 L657.3,374.7 L656.3,374.1 L656.3,373.7 L656.3,373.3 L655.8,372.5 L655.0,372.1 L654.2,371.6 L653.5,371.0 L652.3,371.2 L651.7,370.4 L650.8,370.1 L650.8,369.0 L650.0,368.7 L649.6,367.9 L649.1,367.0 L648.3,367.1 L647.5,367.5 L646.7,366.8 L645.8,366.6 L645.4,365.9 L645.2,365.0 L644.5,364.5 L645.0,363.5 L645.0,362.4 L644.5,361.4 L644.1,360.3 L643.2,359.8 L642.4,359.1 L641.6,358.8 L641.1,358.2 L640.8,357.4 L639.8,357.3 L639.6,356.3 L639.1,355.7 L638.3,355.4 L637.6,354.9 L637.4,354.0 L636.6,353.7 L636.2,353.0 L635.7,352.4 L635.4,351.5 L634.3,351.5 L634.1,350.7 L633.7,349.6 L632.8,349.0 L632.1,348.1 L632.4,346.9 L632.3,345.8 L632.8,344.8 L633.6,344.1Z"/>
<path d="M674.4,374.6 L675.3,374.2 L676.1,373.8 L677.0,373.4 L677.8,373.5 L678.6,374.0 L679.5,374.1 L680.3,374.5 L681.1,374.6 L681.3,375.4 L681.4,376.3 L682.0,376.9 L683.0,377.0 L684.0,377.1 L684.8,377.6 L685.6,378.4 L686.2,379.0 L687.1,379.4 L687.8,380.0 L688.6,380.5 L689.0,381.6 L690.4,381.6 L691.0,382.6 L691.7,383.5 L692.9,383.8 L693.4,385.0 L694.1,385.8 L694.6,386.9 L695.8,387.4 L696.5,388.2 L697.5,388.8 L698.2,389.8 L698.8,390.7 L699.9,391.2 L700.6,392.1 L701.3,392.8 L702.0,393.6 L702.4,394.5 L702.6,395.6 L703.5,396.4 L703.6,397.5 L703.1,398.4 L703.2,399.2 L703.9,399.9 L703.3,400.7 L702.4,400.5 L701.7,399.8 L700.9,399.7 L700.0,399.9 L699.2,400.2 L698.5,400.9 L697.6,400.5 L696.8,399.9 L695.8,399.9 L695.8,401.0 L694.6,401.2 L694.6,402.3 L694.0,402.9 L693.3,402.1 L692.2,402.3 L691.5,401.6 L690.3,401.5 L689.8,400.5 L688.9,399.8 L688.5,398.6 L687.4,398.1 L686.9,397.3 L686.5,396.3 L685.6,395.7 L684.8,395.3 L684.3,394.6 L683.8,393.9 L682.9,393.7 L682.8,392.5 L682.0,392.1 L681.3,391.8 L680.7,392.2 L680.1,391.5 L680.0,390.5 L679.5,389.7 L679.2,388.6 L678.2,388.0 L678.4,387.2 L678.8,386.4 L679.0,385.5 L678.4,384.7 L677.8,383.9 L676.8,383.3 L676.5,382.3 L676.1,381.3 L675.8,380.5 L675.4,379.6 L674.9,378.8 L674.5,378.0 L674.9,377.1 L674.6,376.3 L674.6,375.5Z"/>
</g>
<path d="M424.3,94.0L424.1,94.1L423.9,94.2 M427.2,95.7L427.3,95.9L427.4,96.1 M427.8,97.6L427.2,97.1L426.8,96.6 M426.7,98.2L426.6,98.0L426.3,97.8 M426.4,104.1L426.2,104.2L426.1,104.5 M428.7,104.9L429.0,105.3L429.3,105.7 M433.0,99.9L432.7,100.0L432.5,100.1 M435.2,100.9L435.1,101.4L434.8,101.9 M435.2,102.2L434.7,102.2L434.2,102.2 M444.6,104.0L444.7,104.5L445.1,104.8 M446.0,103.4L446.5,103.8L447.0,103.9 M449.9,103.9L449.7,104.5L449.3,105.0 M451.7,105.3L451.2,105.8L450.6,105.8 M452.3,106.2L452.0,106.6L451.8,106.9 M452.4,108.4L451.9,108.4L451.6,108.0 M452.5,110.0L452.2,110.5L451.7,110.7 M455.0,110.1L455.0,110.6L455.4,111.0 M456.0,110.7L455.9,111.0L456.0,111.2 M458.0,111.8L458.3,112.4L458.6,113.0 M459.0,112.4L459.0,112.7L458.8,112.9 M461.0,114.1L461.0,114.4L461.1,114.7 M463.1,114.6L463.9,114.6L464.6,114.6 M464.0,113.7L464.4,114.3L464.5,115.0 M466.1,112.4L466.5,112.8L466.9,113.2 M467.3,112.2L467.0,112.9L466.4,113.3 M472.1,111.4L472.4,111.6L472.7,111.6 M473.4,111.8L472.8,112.3L472.1,112.4 M474.5,111.0L474.7,111.3L474.8,111.5 M476.8,112.0L476.4,112.4L476.3,113.0 M479.2,113.1L479.3,113.7L479.6,114.3 M481.7,114.2L481.7,114.9L481.4,115.6 M483.0,113.7L482.5,114.1L482.2,114.6 M487.8,115.0L487.4,115.1L486.9,115.3 M491.4,116.0L491.6,116.2L491.9,116.4 M492.5,115.3L493.1,115.7L493.7,116.0 M498.6,115.1L498.6,115.4L498.7,115.6 M501.1,115.8L500.7,116.0L500.4,116.3 M505.7,117.8L505.6,118.2L505.5,118.6 M507.1,118.0L507.1,118.4L507.1,118.8 M514.3,114.6L514.4,115.3L514.1,115.9 M515.3,113.6L515.6,113.8L515.9,113.7 M520.2,113.9L519.6,114.3L519.2,114.9 M521.4,114.0L520.8,114.2L520.4,114.7 M522.6,114.3L522.7,114.6L522.8,114.9 M525.0,114.9L525.2,115.1L525.4,115.4 M528.7,115.4L529.1,115.8L529.5,116.1 M532.1,117.6L532.2,118.3L532.2,119.0 M533.6,117.8L533.3,118.1L533.2,118.4 M719.5,392.6L718.6,391.8L717.6,391.3L716.5,391.4L715.3,391.5L714.3,392.0L713.7,392.9 M718.4,394.2L717.5,393.5L716.9,392.4 M717.4,394.1L716.9,393.6L716.2,393.3 M715.9,394.0L715.6,392.9L715.9,391.9L715.7,390.8 M714.5,393.2L715.4,393.4L716.3,393.6L717.2,394.0 M714.0,392.4L715.1,392.4L716.2,392.2L717.2,391.8L717.7,390.8 M712.9,391.0L713.4,390.2L713.4,389.3 M713.3,389.7L714.0,388.9L714.4,387.9 M711.8,388.8L712.3,387.7L713.4,387.2L714.5,386.8L715.3,385.9L716.5,385.8L717.6,385.4 M711.9,388.8L710.8,388.4L709.6,388.4L708.5,388.4 M711.4,389.9L710.7,390.2L710.3,390.8 M711.6,390.7L710.5,390.8L709.5,390.6L708.5,390.1L707.9,389.3L707.2,388.5 M710.6,392.2L709.7,391.5L708.6,391.4L707.6,390.9L707.1,389.9 M710.7,393.1L709.6,393.6L708.5,394.2L707.3,394.2 M709.9,393.7L710.6,392.7L711.5,391.9L712.0,390.9L711.8,389.7 M708.4,393.9L709.6,393.5L710.9,393.3L712.2,393.2 M707.0,392.8L708.0,392.4L709.0,392.1L710.0,391.9L711.1,391.8L711.9,391.2 M705.7,391.4L706.5,390.5L707.0,389.3L707.7,388.3L709.0,388.0 M705.5,390.6L706.6,390.6L707.7,390.8L708.7,391.2L709.7,390.9L710.6,390.2 M705.0,388.7L705.7,388.4L706.0,387.7 M703.6,388.7L702.8,387.8L702.0,386.9 M703.4,389.6L703.1,388.6L703.4,387.7 M702.1,390.6L703.2,390.0L704.2,389.4L705.0,388.5L705.3,387.4L706.3,386.6L706.9,385.6 M700.8,389.1L701.6,389.4L702.3,390.0 M700.9,387.1L701.8,386.4L702.6,385.7L702.9,384.7L702.4,383.7L701.9,382.7L701.3,381.8 M699.9,386.4L701.0,385.8L701.4,384.7L702.3,383.8L703.4,383.4L704.1,382.4 M699.9,383.6L701.1,383.3L702.4,383.1L703.6,382.7L704.7,382.2L705.6,381.3L705.9,380.1 M700.6,381.6L701.2,382.5L702.1,383.1 M699.9,380.5L700.6,381.6L700.8,382.9L700.8,384.2L700.1,385.2L698.9,385.7 M700.5,378.6L701.5,379.0L702.3,379.7L703.0,380.5 M699.1,376.4L699.9,375.5L700.9,374.9 M698.7,375.9L697.7,375.2L696.5,374.6L695.3,374.5 M698.1,379.0L697.1,378.2L696.1,377.5L694.8,377.3L693.6,377.7L692.9,378.7L692.3,379.8 M698.5,379.8L697.2,379.8L696.0,379.4L694.7,379.1L693.4,378.9L692.2,378.7 M698.5,381.7L697.5,382.2L696.8,383.2L696.2,384.3L695.4,385.1L694.2,385.5L693.3,386.3 M698.7,382.5L697.5,382.7L696.4,382.3L695.6,381.5L694.5,381.2L693.4,381.8L692.3,382.0 M698.1,384.1L697.2,384.5L696.3,384.4L695.5,383.8 M697.3,383.5L697.2,382.6L697.2,381.7 M695.8,382.0L696.8,381.6L697.7,381.1L698.7,380.6L699.2,379.7L700.1,379.0 M695.1,381.2L695.4,380.5L695.5,379.6 M693.5,380.0L693.5,378.8L693.5,377.6L693.4,376.4 M692.9,379.5L693.3,378.5L694.2,377.9L695.2,377.6 M691.4,378.4L691.5,377.2L692.0,376.1L692.2,375.0L691.6,373.9L691.0,372.9L690.7,371.8 M690.4,378.0L691.4,377.9L692.2,377.2 M689.0,376.8L688.9,375.7L689.2,374.6L689.5,373.5L689.4,372.4L689.9,371.4 M688.5,375.9L688.5,374.9L688.1,373.8L688.5,372.8L688.8,371.8L688.7,370.7 M687.5,375.9L688.4,375.8L689.2,375.5 M686.0,374.5L685.6,373.8L685.1,373.2 M685.0,374.2L686.1,373.9L687.1,373.5L687.9,372.6L689.0,372.3L690.1,372.4L691.1,371.8 M682.9,374.0L682.8,373.1L682.2,372.4 M681.5,370.8L682.6,370.7L683.8,370.4L684.5,369.5L685.3,368.6L685.8,367.5 M680.4,370.6L680.8,370.0L681.0,369.3 M679.4,370.3L678.6,370.0L678.1,369.4 M677.0,371.6L677.6,370.7L677.9,369.7L678.5,368.8L678.8,367.8 M675.2,372.5L675.8,371.6L676.9,371.3L677.5,370.4L677.7,369.3 M673.5,373.8L672.4,373.6L671.6,372.8L670.5,372.3 M672.8,374.5L672.2,373.7L671.3,373.1L670.4,372.6L669.3,372.4 M673.2,376.6L672.3,376.0L671.2,376.0 M672.5,377.6L671.9,376.4L672.1,375.2L671.9,373.9L671.0,373.0L669.8,372.6 M672.2,378.6L671.3,379.0L670.3,379.3L669.3,379.3 M671.7,380.4L670.7,381.0L669.8,381.9L668.9,382.6L668.2,383.6L667.1,384.2 M672.2,381.4L671.1,382.0L669.9,382.4L668.8,383.1L667.8,384.0L666.5,384.0 M672.0,382.3L671.0,381.6L669.7,381.6L668.5,381.7L667.4,381.2L666.6,380.2L666.5,379.0 M670.6,382.3L670.9,381.2L671.4,380.0L672.4,379.4L673.2,378.5L674.4,378.2L675.5,377.8 M668.5,379.7L669.5,379.5L670.4,379.1 M668.1,378.6L669.2,378.4L670.1,377.6L670.3,376.5L670.3,375.4 M667.6,377.7L668.1,376.7L668.7,375.7L668.7,374.6L668.1,373.6L667.3,372.8 M667.6,376.4L668.1,375.3L668.4,374.1L668.4,372.9L668.1,371.8 M666.3,374.6L667.0,373.9L668.0,373.8L668.9,374.3 M665.7,373.6L666.1,373.0L666.8,372.7 M666.0,372.3L667.0,372.7L668.1,372.6L668.8,371.8 M663.9,369.6L664.9,368.9L665.4,367.8L665.5,366.7 M664.4,368.2L665.5,367.7L666.6,368.0L667.7,367.8L668.6,367.1L669.8,367.0 M663.5,367.3L664.4,367.7L664.8,368.5L665.2,369.4 M663.2,365.2L664.1,365.1L665.0,365.5L665.7,366.2 M663.7,364.4L664.5,364.9L665.4,364.8L666.3,364.5 M665.3,363.5L665.9,364.4L667.0,364.6L667.8,365.4L668.8,365.6L669.8,365.9 M665.6,362.7L666.4,363.3L667.3,363.8L668.0,364.5L668.8,365.1 M665.1,361.2L666.1,360.8L667.1,360.8 M666.3,359.8L666.5,360.6L667.0,361.2 M667.4,359.2L667.5,360.0L667.4,360.7 M669.6,359.9L669.5,360.7L669.4,361.5 M670.6,360.3L669.7,361.1L668.6,361.7L667.3,361.7L666.2,362.2L665.0,361.8L663.8,361.5 M671.7,360.4L670.9,361.2L670.9,362.4L671.0,363.5L670.8,364.6L671.1,365.7L670.7,366.8 M673.8,360.4L673.7,361.6L674.0,362.6L674.7,363.5L675.3,364.4L676.2,365.2L677.3,365.2 M678.1,360.2L678.7,361.2L679.2,362.4L679.9,363.4 M679.0,360.9L678.4,361.3L677.5,361.3 M680.1,360.9L680.5,362.1L680.7,363.3L681.1,364.4L681.1,365.7L681.2,366.9L681.8,368.0 M682.4,361.1L682.5,362.2L681.9,363.2L681.2,364.0L680.3,364.7 M682.1,361.8L682.2,360.7L682.2,359.7L682.2,358.6L682.8,357.7 M681.6,360.9L681.5,360.2L681.2,359.5 M680.3,359.8L680.8,358.9L680.9,357.9L681.2,356.9L681.4,355.9 M679.7,358.8L679.4,358.1L679.3,357.3 M678.7,358.7L678.7,358.0L678.7,357.2 M676.9,358.6L677.2,357.4L677.8,356.5L678.1,355.4L678.9,354.5L679.0,353.4L679.3,352.3 M676.0,358.4L676.6,357.9L677.2,357.5 M675.1,358.2L675.8,357.2L676.6,356.3L677.7,355.9 M673.5,357.2L673.0,356.1L672.9,354.8L673.2,353.5L672.7,352.3L672.8,351.0 M672.7,356.6L673.1,355.7L672.9,354.7 M670.7,356.3L671.6,355.5L672.8,355.3L674.0,355.4L675.2,355.1 M669.8,356.2L668.7,356.0L667.7,355.7 M668.7,354.0L669.5,353.4L670.6,353.4L671.5,353.8L672.6,353.9L673.4,354.5 M668.8,350.9L670.1,350.9L671.3,350.9L672.4,351.4L673.3,352.2L673.7,353.3L674.3,354.4 M668.4,350.0L669.1,349.1L669.2,348.0L669.8,347.2L670.0,346.1 M666.7,347.1L666.8,346.3L667.1,345.6 M665.9,345.1L665.8,344.1L665.6,343.1L665.8,342.1L666.5,341.3 M662.6,342.6L662.6,341.8L662.9,341.1 M662.3,341.4L663.3,340.8L663.8,339.8 M661.6,340.5L662.0,339.6L661.8,338.6L661.2,337.8 M660.2,339.7L659.8,338.6L659.4,337.5L659.5,336.3L659.9,335.2L659.5,334.1L658.9,333.0 M660.2,341.0L659.1,341.4L658.1,342.2L656.9,342.5 M660.9,341.8L661.1,342.8L660.9,343.7 M662.3,341.9L661.5,342.7L661.1,343.8L660.7,344.8L660.6,346.0L659.9,346.9 M662.7,344.1L662.2,345.3L661.8,346.4L662.0,347.6L662.0,348.8 M663.4,344.7L662.3,344.8L661.2,345.1L660.2,345.5L659.3,346.0 M665.3,347.0L664.3,347.5L663.4,348.0L662.5,348.7L661.4,348.9L660.5,349.4L659.6,350.0 M664.4,348.0L663.6,347.8L662.7,347.8L662.0,348.2 M664.6,350.0L663.8,350.6L662.8,350.9L661.8,351.1 M665.2,352.9L664.2,353.5L662.9,353.6L661.9,354.2L661.2,355.2 M665.2,353.9L664.4,354.8L663.9,356.0 M664.3,355.7L664.3,354.9L664.1,354.1 M663.1,357.2L662.3,356.7L661.6,356.0 M663.0,358.4L662.1,358.6L661.1,358.4L660.3,358.0 M661.5,359.6L660.5,359.7L659.5,360.0L658.5,360.0L657.6,359.4 M661.1,360.4L660.1,360.0L659.4,359.3 M659.9,362.0L659.5,360.9L659.2,359.8L658.9,358.6L658.3,357.6 M658.9,362.6L660.2,362.6L661.4,362.9L662.6,362.8L663.9,362.5 M659.1,361.6L660.2,361.4L661.1,360.7L662.2,360.3L663.3,360.3L664.5,360.1L665.6,359.9 M657.7,360.1L658.2,359.2L659.3,358.7L660.3,358.3L661.0,357.4L661.7,356.6 M658.1,358.8L659.2,358.7L660.4,358.7L661.6,358.5L662.7,359.0L663.9,359.1 M657.3,357.9L657.9,356.8L658.2,355.6L657.8,354.4L657.0,353.5L656.1,352.6L654.9,352.5 M656.6,355.7L657.5,355.1L658.1,354.1 M656.9,354.4L657.6,353.6L658.2,352.6L658.3,351.4L657.9,350.4L657.9,349.2 M656.1,353.5L657.2,353.3L658.1,353.7 M655.8,352.4L656.8,352.7L657.9,352.8L659.0,352.9 M655.1,350.2L656.2,350.5L657.3,350.6 M654.2,349.5L654.4,348.2L654.1,347.0L653.5,345.9L652.5,345.1 M653.8,348.5L654.6,348.4L655.4,348.8L656.0,349.5 M652.7,345.5L653.8,345.7L654.7,345.1L655.1,344.1L656.0,343.5 M651.6,344.9L652.0,344.0L652.7,343.2 M651.2,342.8L652.2,343.1L653.0,343.8L653.7,344.6L653.8,345.6 M650.7,341.9L652.0,341.8L653.1,342.0L654.4,342.2 M649.8,340.6L650.4,339.9L651.0,339.3 M649.1,339.2L650.1,338.6L651.2,338.1L652.3,338.2 M649.1,338.2L650.2,337.8L651.3,337.9L652.5,337.8L653.6,337.6 M647.9,337.9L648.6,337.7L649.4,337.7 M647.8,335.7L648.9,336.2L650.0,336.7L650.6,337.7 M647.1,334.8L647.9,333.9L648.6,332.9L649.2,331.8L649.8,330.7L650.8,330.0 M646.2,334.1L647.3,333.6L648.3,332.9L649.4,332.6L650.5,332.2L651.6,331.7 M644.9,331.1L645.7,330.2L646.3,329.1 M644.4,330.2L644.5,328.9L645.3,327.9L646.2,327.0L646.4,325.8 M642.7,328.8L643.7,329.1L644.6,329.6L645.2,330.5L645.3,331.5 M642.8,327.6L643.8,327.4L644.9,327.5L645.8,327.2L646.9,327.2 M642.5,326.6L642.8,325.9L643.3,325.4 M641.8,325.9L643.0,326.0L644.1,326.2L645.2,326.0L646.2,325.6L647.1,325.0 M640.5,324.2L641.2,324.4L642.0,324.7 M639.5,323.5L640.6,323.0L641.5,322.5L642.0,321.4L642.2,320.3L642.6,319.3L643.5,318.6 M639.3,322.3L639.5,321.2L639.2,320.1L638.5,319.3L637.4,319.1 M638.3,320.5L639.1,320.7L639.6,321.3 M637.1,320.3L637.6,319.1L637.5,317.8L636.7,316.8L636.3,315.6 M636.3,319.4L635.2,319.4L634.1,319.2L633.1,319.0L632.3,318.2 M636.1,321.2L636.0,321.9L635.7,322.6 M637.4,321.6L636.5,321.6L635.7,321.1 M637.9,322.4L636.9,322.7L635.9,322.8L635.0,323.3 M638.0,323.4L637.0,323.6L636.1,323.9L635.1,323.9 M638.5,325.3L638.0,325.9L637.3,326.2 M638.9,326.2L637.8,326.6L636.6,326.4L635.4,326.1L634.2,326.1L633.0,326.2L631.9,325.6 M639.6,326.9L638.4,326.6L637.3,326.7L636.5,327.5L635.9,328.5L635.5,329.6 M641.7,329.0L640.5,328.9L639.2,328.6L638.0,328.8L636.8,328.3L636.0,327.4 M641.3,330.4L641.0,331.6L640.2,332.7L639.9,333.9 M641.7,331.2L640.6,331.6L639.5,332.0L638.6,332.8L638.1,333.9 M642.3,332.0L642.1,333.1L641.4,334.1L641.1,335.2L640.7,336.3L639.8,337.0 M643.5,333.5L642.6,333.8L641.9,334.5 M643.8,334.5L642.9,334.8L642.0,335.1L641.3,335.8 M643.9,335.5L643.6,336.5L642.9,337.4L642.7,338.4L642.3,339.5 M644.9,336.0L644.7,337.3L644.0,338.2L643.2,339.2L642.4,340.1L641.9,341.3L641.1,342.2 M645.4,338.0L644.3,337.9L643.1,338.2L642.4,339.1L642.1,340.3L642.3,341.5L643.2,342.3 M647.6,341.3L646.7,341.6L646.0,342.4L645.1,342.6 M647.7,341.7L648.8,341.1L649.7,340.5L650.6,339.7L651.1,338.6 M647.1,341.0L646.3,340.2L645.5,339.6 M645.3,340.8L644.5,340.0L644.0,339.0L643.7,338.0L644.2,336.9L644.0,335.9 M642.5,340.7L642.8,339.7L642.6,338.6L642.2,337.7L641.4,336.9L640.4,336.7 M641.5,341.2L640.9,340.2L639.8,339.8L638.9,339.1L637.7,338.8 M639.8,339.9L640.9,339.3L642.2,339.4L643.3,338.8L644.4,338.2L644.9,337.0 M637.5,340.1L637.0,338.9L637.2,337.6 M635.7,341.2L634.9,340.9L634.4,340.4 M633.7,343.2L632.6,343.0L631.7,342.3 M632.3,344.4L631.4,343.7L630.3,343.7L629.5,342.9L628.4,342.8L627.6,342.1L626.9,341.2 M631.4,344.5L630.6,344.1L629.6,343.8 M628.9,344.6L629.6,344.4L630.4,344.4 M627.5,343.1L628.4,342.2L628.8,340.9 M626.5,343.0L626.1,342.1L626.2,341.1L626.0,340.1 M624.5,343.3L625.5,342.6L626.1,341.5L626.0,340.2L625.2,339.2 M623.7,342.5L623.5,341.5L623.6,340.5L624.1,339.5L624.8,338.7 M621.7,342.1L622.1,340.9L621.8,339.7L622.0,338.4L621.9,337.2 M621.3,340.7L620.8,339.7L620.3,338.7L620.4,337.6L620.1,336.5L619.4,335.7L619.1,334.6 M619.3,340.6L619.7,340.0L620.2,339.4 M618.7,339.8L619.6,339.1L620.8,338.9L621.9,338.4L623.0,338.3L624.1,338.0 M616.5,337.8L617.2,336.8L618.0,335.8L618.0,334.6 M615.1,337.9L614.9,336.8L615.2,335.8 M613.3,336.6L613.4,335.8L613.7,335.1 M613.0,335.5L612.9,334.3L613.3,333.0L612.9,331.9L611.9,331.0L611.0,330.2 M525.6,318.6L525.8,318.0L526.1,317.5 M524.9,318.3L525.4,318.0L526.0,318.0 M524.4,316.8L525.3,317.5L526.3,318.1 M524.8,316.0L525.5,315.6L526.2,315.1 M525.6,314.2L526.7,313.8L527.8,314.2 M524.9,313.6L525.1,312.8L525.4,312.0 M524.1,313.4L523.7,313.1L523.5,312.6 M523.1,312.4L524.0,312.3L525.0,312.6L525.9,312.4L526.9,312.3 M522.3,312.0L523.1,311.4L524.0,310.8L524.6,310.0L525.3,309.2 M521.5,310.7L522.1,309.9L522.1,309.0L522.3,308.1 M520.7,310.4L521.7,309.7L522.2,308.6 M520.0,310.5L519.4,310.0L518.8,309.7 M519.1,310.5L518.7,309.4L518.5,308.2 M517.7,310.9L517.6,310.1L517.4,309.2L517.0,308.4 M517.0,311.7L516.4,310.5L515.3,310.0 M515.9,310.8L516.8,310.1L517.4,309.2 M515.0,310.7L515.0,310.2L515.3,309.8 M514.3,309.2L515.4,309.2L516.3,308.7L517.0,307.9 M515.2,308.5L516.0,308.4L516.9,308.5 M515.1,306.7L516.1,306.4L517.2,306.4L518.2,306.8 M513.9,306.6L513.7,306.0L513.8,305.5 M513.6,307.2L512.6,306.7L511.7,306.1L510.7,305.7L509.9,304.8 M513.1,308.7L512.1,308.4L511.3,307.9 M513.0,309.6L512.2,309.5L511.5,309.1 M511.7,310.7L511.0,310.2L510.3,310.1 M509.9,311.0L510.4,310.4L511.1,310.1 M509.1,310.8L508.7,309.8L507.8,309.3L506.8,309.4L505.8,309.4 M507.5,311.1L507.4,310.0L507.3,308.8L507.2,307.7L507.5,306.6 M506.8,311.9L506.3,310.9L506.1,309.9L505.9,308.8L505.1,308.0 M505.4,312.5L504.9,311.6L505.0,310.6L505.1,309.7L505.1,308.7 M504.4,312.5L503.7,311.5L502.6,310.9L501.5,310.7 M503.3,312.9L502.8,312.0L502.4,311.1L502.5,310.1L503.2,309.4 M502.0,312.3L502.8,311.5L503.6,310.7 M501.4,311.6L502.3,311.5L503.0,311.9 M500.8,309.9L501.5,310.2L502.1,310.6 M500.9,308.9L501.9,308.9L502.7,308.5L503.6,308.1 M500.6,308.4L500.3,307.3L500.1,306.2L499.7,305.1L498.8,304.3 M499.9,309.2L499.5,309.6L499.1,310.1 M500.1,310.1L499.8,310.5L499.4,310.7 M500.2,311.8L499.7,312.3L499.6,313.0 M500.5,312.6L499.6,312.8L499.0,313.5 M502.1,315.1L502.1,315.6L501.8,316.0 M503.8,316.5L503.1,317.3L502.4,318.1L501.3,318.3L500.4,318.9 M504.5,317.4L503.5,317.7L502.6,318.0L501.6,317.9L500.7,318.2 M504.6,319.0L504.3,318.3L504.1,317.6 M504.2,319.7L503.7,319.7L503.2,320.0 M504.1,321.4L503.4,321.7L502.9,322.3 M503.6,322.1L502.8,322.6L502.3,323.6L502.2,324.6 M504.0,323.8L503.2,322.9L502.1,322.5L500.9,322.3 M503.1,326.9L502.6,327.0L502.0,326.8 M503.0,328.6L502.4,329.0L501.8,329.3 M503.3,329.3L502.2,329.7L501.3,330.4 M503.6,330.7L502.9,330.2L502.3,329.8 M500.4,331.3L499.4,330.6L498.4,330.0 M499.6,331.5L499.3,330.9L498.7,330.5 M498.0,331.7L498.7,330.8L499.8,330.4L500.9,330.6 M497.2,331.8L497.4,330.8L497.5,329.9L497.4,328.9 M495.6,331.5L496.1,330.8L496.7,330.2 M494.1,331.6L493.7,331.3L493.2,331.3 M492.7,332.3L492.0,332.0L491.4,331.5 M491.8,331.9L492.0,331.2L492.1,330.5 M491.2,332.5L491.7,331.5L491.9,330.4L491.4,329.4 M489.5,333.0L489.0,332.8L488.6,332.4 M488.5,333.4L487.5,333.3L486.5,333.3L485.6,333.0 M487.2,334.7L487.8,334.0L488.7,333.7 M485.5,335.1L485.0,334.2L484.1,333.8 M485.2,335.9L485.3,335.3L485.5,334.8 M484.5,336.2L483.3,335.8L482.7,334.9 M483.5,337.4L482.7,337.5L481.8,337.7 M483.2,338.1L482.8,337.2L482.2,336.5L481.3,336.1 M481.3,339.7L481.4,339.1L481.5,338.6 M480.3,339.8L480.2,339.2L480.3,338.6 M479.8,340.7L479.8,340.1L479.6,339.6 M478.5,342.0L478.0,341.7L477.5,341.3 M477.9,342.6L477.3,342.0L476.5,341.6 M475.3,343.7L475.0,342.6L474.9,341.5L474.2,340.6L473.5,339.7 M474.9,344.7L473.9,344.8L472.9,344.6L471.9,344.3L471.3,343.5 M474.2,345.2L473.7,345.1L473.2,344.8 M472.7,346.1L472.4,344.9L472.9,343.7L472.8,342.5 M471.7,345.9L471.2,345.5L471.0,344.9 M471.2,346.7L470.4,345.8L469.3,345.3L468.1,345.5 M469.5,347.3L469.4,346.3L469.9,345.4L470.4,344.6L470.9,343.7 M468.8,348.1L467.8,347.9L466.8,348.2L465.9,348.5 M467.2,349.3L466.8,348.8L466.6,348.2 M464.6,349.3L464.5,348.4L464.4,347.4L464.1,346.5 M463.7,349.4L464.5,348.8L465.0,347.9L465.1,346.9L465.3,345.9 M462.4,348.3L462.8,347.6L463.0,346.9 M463.1,345.4L464.0,345.2L465.0,345.1L465.9,344.8 M463.8,345.0L464.3,345.6L464.8,346.1 M464.4,343.3L464.5,344.3L465.1,345.0 M465.3,343.2L466.0,344.2L466.5,345.2 M465.9,342.6L465.5,343.8L465.8,344.9 M467.4,342.1L467.6,342.7L467.9,343.4 M468.1,341.7L469.1,342.1L470.1,342.6 M469.4,340.9L470.5,341.6L471.5,342.4L472.3,343.4 M470.8,339.8L470.9,340.7L471.5,341.4 M471.4,338.3L472.5,337.8L473.0,336.8L473.2,335.7 M471.1,337.3L471.8,337.1L472.6,337.1 M472.3,336.8L472.9,337.9L472.8,339.1 M471.7,336.5L470.9,335.8L470.3,334.9L470.1,333.8 M471.0,336.7L471.4,335.7L471.1,334.7L471.0,333.6 M469.8,337.6L468.8,337.7L467.7,337.6L466.7,337.8L465.9,338.5 M469.0,338.1L468.5,338.2L468.1,338.5 M469.0,339.2L468.1,339.0L467.1,339.0L466.2,339.4 M467.5,340.0L467.8,338.9L467.4,337.9L466.8,337.0L465.8,336.6 M466.7,339.9L466.1,339.7L465.6,339.2 M465.4,340.0L465.6,338.8L465.5,337.5L466.1,336.4 M464.7,339.7L464.9,338.8L465.2,337.8L464.9,336.8L464.2,336.1 M464.4,338.9L464.9,338.2L464.8,337.3 M463.6,337.4L464.7,337.2L465.5,336.4L465.7,335.3L466.3,334.3 M463.4,336.5L464.4,335.9L465.5,335.2 M464.1,335.5L465.2,335.5L466.2,336.1L466.9,337.0 M463.8,333.8L465.0,333.6L466.1,334.0L466.8,334.9 M463.7,332.9L464.5,333.6L465.2,334.5 M464.2,332.0L464.8,331.5L465.3,330.9 M464.6,330.4L465.2,330.3L465.9,330.0 M465.0,328.9L465.7,329.3L466.5,329.3 M487.9,311.7L487.1,312.6L485.9,312.8 M488.6,312.7L488.9,313.2L489.2,313.7 M489.7,312.4L489.5,313.6L490.1,314.8L490.6,315.9 M489.7,312.6L489.5,312.1L489.0,311.7 M489.0,312.3L488.9,311.4L489.2,310.6L489.7,309.9 M438.1,349.6L437.5,348.9L436.8,348.4L435.9,348.2 M441.1,351.2L440.4,351.9L439.9,352.8 M441.9,351.5L441.9,351.9L441.9,352.2 M442.8,351.8L443.0,352.5L443.6,352.9 M445.3,352.3L444.9,352.7L444.7,353.2 M446.0,352.8L446.5,354.0L447.0,355.1 M446.9,354.2L446.0,354.4L445.1,354.7 M447.5,354.8L446.3,354.7L445.2,355.0 M447.2,355.8L446.8,356.5L446.0,356.7 M447.9,357.4L447.2,356.4L446.3,355.6 M447.2,358.0L446.8,358.0L446.5,358.2 M446.4,358.5L445.4,358.5L444.4,358.7L443.7,359.3 M445.0,360.6L444.8,360.2L445.1,359.7 M444.0,360.9L443.9,360.2L443.6,359.5 M443.8,361.8L442.9,361.9L441.9,362.1 M442.5,363.0L441.8,362.4L441.6,361.4L441.6,360.5 M441.7,363.4L441.4,363.1L440.9,362.9 M440.7,363.6L440.9,363.2L441.1,362.8 M439.2,365.9L439.1,365.4L438.8,364.9 M438.2,366.2L437.7,365.5L437.2,364.7 M437.2,367.7L437.0,367.1L437.1,366.5 M436.2,369.1L435.9,369.2L435.5,369.1 M435.8,369.8L435.6,369.5L435.3,369.3 M435.3,371.7L435.4,370.6L436.1,369.8 M434.6,372.4L434.5,371.4L433.7,370.7 M433.8,372.9L433.4,372.9L433.2,372.7 M432.0,373.3L431.9,372.9L431.7,372.5 M431.4,373.7L431.5,372.9L431.2,372.2 M429.5,375.1L429.6,374.2L430.0,373.4L430.1,372.5 M429.0,375.8L428.3,376.0L427.5,376.2 M428.4,376.4L427.9,375.5L427.5,374.6 M426.0,377.8L425.6,377.4L425.2,377.1 M425.6,378.7L425.3,378.4L425.3,378.0 M423.5,380.4L423.1,380.1L422.7,380.0 M422.4,380.5L422.5,380.1L422.7,379.8 M421.1,381.7L420.2,381.2L419.2,381.3L418.2,381.1 M420.5,382.4L420.6,381.9L420.9,381.5 M419.8,383.0L419.2,382.5L418.7,381.9 M418.4,384.1L418.2,383.8L418.0,383.3 M417.4,384.2L417.2,383.4L417.0,382.7 M415.6,386.1L414.8,385.2L413.7,384.6 M414.8,386.5L414.2,385.4L414.3,384.1 M414.9,387.6L414.7,386.3L413.9,385.3 M413.6,388.5L412.5,387.9L411.5,387.3 M413.2,389.2L413.4,388.1L413.6,387.1 M412.2,389.2L411.1,389.1L410.1,389.2 M411.7,390.8L411.1,390.7L410.6,391.0 M411.0,391.4L410.0,391.6L409.0,392.1 M410.1,393.7L410.1,393.2L410.0,392.8 M409.2,393.8L408.5,393.9L407.9,394.1 M408.9,394.6L408.3,393.5L407.5,392.5 M405.9,396.5L405.8,395.9L405.3,395.6 M404.7,397.8L404.1,397.1L403.9,396.2L403.1,395.6 M403.9,398.3L403.9,397.6L403.9,397.0 M403.2,398.8L402.5,397.8L402.0,396.6 M401.8,399.8L401.7,398.9L401.9,398.1 M401.2,400.4L400.0,400.1L398.8,400.4 M400.2,400.2L399.2,400.0L398.3,399.5 M399.1,401.7L398.5,401.1L398.4,400.2 M397.9,401.6L397.3,401.1L396.5,401.2 M397.5,402.6L397.1,402.3L396.9,401.9 M396.0,403.5L395.4,403.5L395.0,403.2 M395.0,403.7L394.7,403.6L394.3,403.5 M394.5,404.6L394.3,404.1L394.2,403.5 M392.9,405.1L392.4,405.0L391.8,404.8 M392.3,405.8L391.4,405.0L390.2,404.6 M391.5,405.9L391.0,405.1L390.4,404.3L390.3,403.3 M390.2,407.1L389.3,407.1L388.6,407.6L387.8,408.0 M389.2,407.3L389.2,406.5L389.3,405.8 M388.9,408.3L388.9,407.9L389.1,407.6 M387.8,409.5L387.6,408.6L387.2,407.6L387.1,406.6 M386.7,409.5L386.3,409.5L386.0,409.3 M386.2,410.1L385.3,409.9L384.4,409.9 M383.9,412.8L384.1,412.2L383.9,411.6 M382.2,413.5L382.0,413.1L381.8,412.8 M381.6,414.2L380.3,414.0L379.1,414.4 M379.4,415.7L378.4,415.1L377.5,414.4 M378.9,416.6L379.0,415.7L379.1,414.8 M378.1,417.1L378.3,416.2L378.1,415.4L378.4,414.6 M374.1,418.6L373.4,418.5L372.7,418.7 M373.8,420.5L373.5,420.5L373.1,420.5 M372.6,422.0L372.1,421.5L371.4,421.3 M371.9,421.8L372.7,421.4L373.4,420.9 M372.7,421.1L373.6,420.7L374.4,420.2L375.4,420.0 M372.9,419.5L373.6,419.0L374.0,418.1L374.3,417.3 M372.7,418.7L373.4,418.3L374.1,418.0 M372.4,418.2L372.2,417.8L372.0,417.5 M369.0,418.6L368.4,417.7L367.6,417.0 M368.6,419.3L367.9,419.3L367.3,419.3 M367.0,419.5L366.8,419.1L366.7,418.6 M366.5,420.0L365.7,419.6L365.3,418.8 M365.3,420.9L365.3,420.3L365.6,419.8 M364.5,421.0L364.8,420.3L364.9,419.7 M363.7,422.3L363.6,421.9L363.4,421.5 M363.1,422.7L362.3,422.0L362.1,421.0L362.4,420.0 M361.6,423.1L362.0,422.1L362.6,421.1 M358.5,423.9L358.5,423.4L358.3,422.8 M356.9,424.8L355.7,424.3L355.0,423.2 M354.0,424.3L354.5,423.1L355.4,422.3 M351.5,421.7L351.6,422.0L351.7,422.3 M352.7,421.0L351.8,421.4L350.7,421.5 M353.3,421.7L352.6,422.5L351.7,422.9L350.9,423.4 M350.5,420.3L350.7,419.6L350.3,418.9 M349.7,421.5L349.5,421.1L349.3,420.6 M349.0,423.0L348.1,423.0L347.3,423.0 M348.4,424.8L348.1,424.3L348.0,423.9 M343.6,428.6L343.7,428.2L343.7,427.7 M340.6,431.1L340.6,430.6L340.9,430.1 M339.8,432.5L339.4,432.5L339.1,432.7 M339.6,434.3L338.8,434.5L338.0,434.2 M335.1,430.9L334.7,430.4L334.6,429.7 M331.1,431.9L331.2,431.2L331.6,430.6 M329.3,432.1L329.0,431.8L329.0,431.5 M327.7,432.0L328.0,431.9L328.2,431.7 M327.5,430.9L327.9,430.9L328.3,430.9 M331.9,425.0L332.4,425.7L332.5,426.5 M332.6,424.3L332.6,424.6L332.5,424.9 M334.3,423.2L334.7,423.5L334.8,423.9 M335.1,422.6L335.0,422.9L334.9,423.3 M335.9,422.0L336.2,422.3L336.2,422.8 M340.6,419.2L340.7,419.7L340.8,420.2 M341.6,418.8L342.3,419.3L343.0,419.9 M359.5,417.4L359.2,417.5L358.9,417.3 M360.9,416.5L361.3,415.8L361.9,415.2 M362.5,415.1L363.4,415.6L364.2,416.3L364.7,417.1 M363.8,413.1L365.0,413.2L366.2,413.1 M376.2,402.0L376.4,402.9L376.2,403.9 M376.7,401.2L377.1,401.9L377.1,402.7 M378.2,401.0L378.3,401.5L378.2,401.9 M379.0,401.0L379.0,402.1L379.0,403.3 M380.6,400.3L380.5,401.2L380.0,402.0 M381.2,399.6L381.4,400.1L381.8,400.4 M382.7,398.9L383.1,399.1L383.6,399.1 M384.9,397.9L385.7,398.9L386.7,399.7 M385.7,397.3L386.0,397.1L386.3,396.9 M386.1,396.2L386.2,396.6L386.4,396.9 M386.3,395.4L386.5,395.7L386.7,396.2 M387.6,393.4L387.8,393.7L388.0,394.0 M387.5,392.4L388.1,393.1L388.8,393.7 M388.4,391.8L388.8,392.8L388.8,393.8L388.1,394.7 M401.1,368.8L401.4,368.9L401.7,369.0 M401.4,367.5L401.7,367.5L402.0,367.5 M402.5,364.2L403.1,364.1L403.6,363.7 M407.5,356.9L408.1,356.5L408.9,356.4 M408.6,355.0L409.1,354.9L409.6,355.2 M408.9,354.0L409.7,354.1L410.3,354.6 M409.9,351.9L410.5,351.7L411.2,351.4 M409.9,351.6L409.5,351.3L409.1,351.2 M405.7,355.5L405.7,355.1L405.8,354.8 M405.0,356.5L404.5,356.3L404.0,356.1 M402.0,357.8L402.1,357.3L402.0,356.8 M396.6,359.5L397.0,359.3L397.2,359.0 M394.3,358.4L394.7,358.0L395.1,357.7 M393.8,357.5L394.0,357.4L394.2,357.4 M392.2,353.0L393.0,352.8L393.8,352.7 M392.2,350.0L392.9,350.0L393.6,350.2 M391.2,350.1L391.2,349.4L390.7,348.9 M385.4,356.4L385.3,356.7L385.1,356.8 M381.0,356.4L381.4,356.3L381.6,356.1 M380.2,354.3L380.9,354.3L381.7,354.3 M379.5,353.4L379.6,353.2L379.9,353.1 M377.6,353.3L377.5,352.5L377.8,351.8 M375.4,354.3L375.5,354.1L375.6,353.8 M373.7,353.8L373.7,353.5L373.8,353.2 M372.9,353.2L373.2,352.7L373.6,352.3 M368.9,350.9L368.7,350.2L368.4,349.5 M364.1,353.5L363.9,353.2L363.5,353.1 M358.2,356.6L357.8,356.4L357.4,356.4 M356.6,348.3L357.1,348.7L357.5,349.1 M354.9,341.5L355.7,341.7L356.4,341.4 M356.8,338.6L357.2,339.0L357.5,339.6 M357.0,336.3L357.3,335.7L357.3,335.1 M344.4,328.8L344.1,328.7L343.9,328.6 M337.1,329.7L337.0,329.4L337.0,329.0 M335.9,329.1L336.2,329.0L336.6,328.9 M333.7,328.5L334.2,328.1L334.9,327.9 M332.6,327.4L332.7,327.7L332.7,328.0 M333.0,325.4L333.2,325.2L333.4,325.1 M331.4,322.2L331.5,321.5L331.3,320.9 M329.0,317.3L329.3,317.2L329.5,317.0 M328.6,316.4L328.9,316.4L329.1,316.3 M327.2,314.7L327.5,314.4L328.0,314.4 M324.3,312.6L324.4,312.4L324.5,312.1 M323.2,312.0L323.4,311.7L323.5,311.4 M323.4,310.1L323.7,310.3L323.8,310.7 M325.5,308.6L325.6,309.1L325.4,309.5 M327.7,307.2L327.8,307.6L328.0,308.0 M329.2,305.0L329.5,304.9L329.8,305.1 M328.7,302.6L328.9,302.3L329.0,302.0 M327.8,300.2L327.9,300.6L328.2,300.9 M320.0,288.8L320.3,288.9L320.6,288.9 M319.6,287.6L319.7,287.4L319.9,287.2 M327.5,277.2L327.5,277.5L327.4,277.7 M329.7,274.4L330.2,274.7L330.7,274.7 M335.6,266.7L336.3,266.4L336.8,265.8 M337.5,263.5L337.8,263.5L338.1,263.5 M339.9,259.8L339.9,260.1L340.2,260.4 M341.2,257.7L341.5,257.8L341.6,258.1 M342.3,230.3L342.4,229.8L342.7,229.4 M339.8,229.3L339.5,228.7L339.2,228.0 M337.1,228.4L337.0,228.1L337.0,227.7 M328.9,220.8L329.0,221.4L329.2,222.0 M329.5,218.1L330.2,217.8L331.0,217.9 M328.3,215.6L328.9,215.5L329.3,215.0 M326.5,213.6L326.5,213.4L326.5,213.1 M325.7,206.9L325.9,206.8L326.1,206.8 M319.8,199.4L319.7,199.8L319.5,200.3 M322.1,198.3L322.6,198.4L323.0,198.7 M323.2,197.5L323.7,197.8L324.2,197.7 M327.1,196.5L327.8,196.7L328.2,197.4 M330.5,194.2L330.6,194.5L330.9,194.6 M332.7,192.9L332.8,193.5L333.1,194.0 M334.0,192.8L334.1,193.0L334.1,193.3 M334.8,191.8L334.9,192.2L334.8,192.5 M401.7,103.6L401.7,104.1L402.0,104.5 M403.0,103.3L403.1,103.6L403.2,103.9 M409.2,103.5L409.1,104.0L408.9,104.5 M411.5,103.0L411.6,103.3L411.8,103.6 M415.7,100.5L416.2,100.7L416.7,100.6 M416.9,98.2L417.1,98.4L417.2,98.7 M417.9,97.4L418.3,97.4L418.7,97.3 M420.7,95.2L421.0,95.3L421.4,95.3 M422.5,93.9L422.8,94.1L423.1,94.4 M284.1,235.8L284.5,236.1L284.7,236.5 M290.4,239.4L290.2,239.5L290.1,239.6 M301.8,248.5L301.6,247.9L301.8,247.3 M300.0,250.2L299.9,250.0L299.8,249.8 M297.1,250.2L297.5,250.0L297.7,249.5 M292.4,252.1L292.0,252.0L291.7,251.8 M290.8,252.1L291.3,252.2L291.7,252.1 M289.8,249.6L290.0,249.7L290.2,249.8 M281.2,240.0L281.6,239.8L282.0,239.5 M278.8,240.5L278.8,240.1L278.6,239.8 M276.4,240.9L276.7,240.8L276.8,240.6 M308.0,313.2L308.2,313.3L308.3,313.5 M310.9,312.7L311.1,312.9L311.1,313.2 M313.9,312.5L314.1,313.0L314.1,313.5 M311.2,324.8L311.7,324.6L312.1,324.8 M304.0,319.1L304.1,318.8L304.1,318.4 M302.2,316.9L302.2,316.6L302.1,316.2 M300.7,315.3L300.8,314.9L301.1,314.6 M504.7,332.5L505.1,332.6L505.4,332.7 M507.5,327.8L507.8,327.8L508.0,328.0 M511.1,321.9L511.3,322.1L511.6,322.3 M513.4,323.0L512.7,322.7L512.0,322.6 M511.1,328.2L510.7,328.2L510.4,328.4 M510.4,329.1L510.2,328.7L510.3,328.3 M509.1,331.2L508.9,330.9L508.4,330.8 M507.3,333.6L506.9,333.3L506.6,332.9 M518.6,318.1L518.5,318.6L518.2,319.1 M520.9,317.0L520.8,317.3L520.7,317.6 M517.5,322.8L517.4,322.3L517.6,321.9 M515.8,320.8L516.2,320.2L516.5,319.6 M506.5,316.8L506.4,317.1L506.2,317.4 M506.9,318.5L506.6,318.4L506.4,318.2 M505.3,321.7L505.7,321.5L505.9,321.2 M309.4,434.3L309.5,434.6L309.7,434.8 M316.9,428.6L316.9,428.9L316.8,429.2 M320.1,428.2L319.9,428.5L319.7,428.8 M323.2,428.5L323.0,428.8L322.9,429.0 M325.6,429.0L325.4,429.4L325.1,429.7 M326.5,431.2L326.3,431.4L326.1,431.5 M326.6,434.0L326.4,434.1L326.2,434.3 M325.7,436.3L325.4,436.3L325.2,436.2 M323.9,437.6L324.1,437.2L324.4,436.9 M358.3,428.8L358.6,429.1L358.9,429.3 M358.6,427.0L359.0,427.1L359.3,427.0 M359.3,426.4L359.5,426.8L359.5,427.2 M360.2,426.1L360.3,426.7L360.3,427.3 M361.2,427.5L361.1,427.7L361.0,427.9 M361.6,428.2L361.4,428.7L361.6,429.2 M361.5,429.7L361.1,429.6L360.8,429.6 M360.4,430.5L360.1,430.1L359.7,429.9 M364.8,435.8L365.3,435.5L365.7,435.1 M365.0,435.1L365.1,435.6L364.9,435.9 M365.7,433.8L366.4,433.7L367.2,433.8 M366.6,433.5L366.8,433.7L367.1,433.7 M367.4,432.0L367.9,432.4L368.2,432.9 M367.5,431.0L368.2,431.2L368.8,431.7 M368.8,430.4L368.8,431.1L368.8,431.7 M369.0,431.6L368.4,431.7L367.9,431.8 M368.2,432.0L367.5,432.4L366.6,432.2 M367.5,434.0L367.3,433.4L367.1,432.9 M366.5,435.1L366.2,435.1L365.9,435.1 M365.8,435.7L365.5,435.5L365.2,435.2 M365.0,436.3L365.2,435.9L365.4,435.6 M372.2,431.7L373.0,431.8L373.8,431.9 M373.5,431.2L373.0,431.4L372.6,431.2 M374.0,432.5L373.8,432.4L373.5,432.5 M374.5,434.7L374.6,434.9L374.4,435.2 M375.5,434.7L375.5,434.9L375.6,435.2 M376.7,437.7L376.4,437.1L376.1,436.5 M375.9,437.6L376.5,436.9L376.9,436.2 M374.4,435.9L374.4,435.6L374.5,435.4 M373.8,435.4L373.8,435.2L373.7,435.0 M276.5,450.1L277.2,450.5L277.8,450.9 M276.6,449.2L277.5,449.2L278.3,449.2 M277.4,447.5L277.9,448.1L278.4,448.7 M277.7,446.6L278.1,447.0L278.5,447.4 M277.8,445.7L278.6,445.1L279.5,445.0 M279.1,444.8L279.9,445.1L280.6,445.6 M280.0,444.3L280.1,445.1L279.7,445.7 M283.5,444.4L283.3,444.7L283.2,445.1 M284.3,444.8L284.5,445.3L284.5,445.8 M284.9,445.6L284.7,445.1L284.2,444.7 M286.3,447.6L286.3,447.9L286.4,448.1 M287.0,448.5L286.4,449.3L285.4,449.6 M287.9,450.8L287.9,450.6L287.8,450.3 M285.3,452.4L285.0,451.5L284.6,450.7 M284.5,453.1L284.7,452.4L285.2,452.0 M283.4,453.0L283.1,452.8L282.8,452.7 M281.8,454.2L281.6,454.1L281.3,454.0 M278.4,454.0L278.4,453.2L278.1,452.5 M277.8,453.2L278.1,453.0L278.3,452.9 M276.9,452.7L277.0,452.4L277.1,452.2 M249.8,461.1L250.1,461.6L250.5,461.9 M252.8,457.8L253.2,457.9L253.6,458.3 M259.7,452.4L259.9,452.5L260.0,452.7 M262.3,450.1L262.5,450.6L262.9,450.9 M265.6,450.1L265.6,450.6L265.9,451.1 M267.5,451.8L267.3,452.0L267.2,452.2 M266.7,453.9L266.5,453.8L266.3,453.7 M260.6,456.9L260.5,456.7L260.3,456.7 M258.2,459.0L258.2,458.8L258.1,458.6 M256.8,459.2L256.7,459.0L256.8,458.8 M254.0,461.0L254.0,460.8L253.9,460.6 M431.9,386.6L432.4,386.7L433.0,386.7 M433.3,385.0L433.3,385.5L433.1,386.0 M434.1,384.4L434.6,385.2L434.8,386.2L435.3,387.0L435.7,387.9 M435.6,383.3L436.7,383.6L437.6,384.4 M436.4,382.9L437.3,383.2L438.2,383.0L438.7,382.3 M438.0,382.7L437.1,383.3L436.0,383.5 M440.3,383.0L439.3,383.0L438.5,382.7L437.5,382.5 M441.1,382.8L442.1,383.1L443.2,382.9 M441.3,381.9L442.1,381.3L442.7,380.6 M441.8,380.3L442.2,380.5L442.6,380.4 M442.3,379.5L442.8,379.8L443.2,380.4 M443.1,378.1L444.3,378.4L445.5,378.4L446.6,377.6 M444.2,378.8L444.2,379.6L443.6,380.2 M445.1,380.2L444.5,379.3L443.7,378.6L443.1,377.8 M445.1,381.1L444.6,381.3L444.2,381.6 M445.1,380.9L445.0,381.9L445.1,383.0L445.7,383.8 M446.8,379.7L447.0,380.5L447.2,381.2 M447.2,378.7L447.5,379.5L447.8,380.2 M449.0,378.2L448.9,379.2L448.4,380.0 M451.6,377.6L451.5,378.1L451.6,378.6 M452.6,377.1L452.6,377.7L452.3,378.3 M455.1,376.4L456.0,376.8L456.6,377.5L457.2,378.3L457.9,379.0 M457.0,376.0L457.4,376.3L457.9,376.4 M458.9,376.4L458.7,377.2L458.4,377.9 M459.1,377.2L458.3,378.1L458.0,379.2 M459.0,378.8L458.0,378.1L456.8,377.9 M459.3,380.1L458.3,380.8L457.2,381.6L456.2,382.3 M459.9,380.9L459.9,381.3L460.0,381.7 M460.2,382.3L459.9,381.7L459.5,381.2 M459.8,384.2L459.1,384.2L458.4,384.2 M459.9,385.0L459.0,385.6L458.1,386.3L457.0,386.4 M459.2,386.7L458.3,386.9L457.7,387.6L456.9,388.1 M457.9,386.8L458.5,386.7L459.1,386.6 M456.5,385.7L457.2,384.8L457.8,383.9 M454.8,385.5L454.6,384.6L454.2,383.7L453.9,382.8 M453.2,389.3L453.6,388.3L454.1,387.3L454.7,386.5 M452.0,391.1L451.8,392.0L451.1,392.7L450.3,393.1 M451.7,392.0L451.6,391.5L451.2,391.1 M450.4,393.5L450.2,392.7L450.0,391.9 M449.5,393.6L448.6,392.9L447.6,392.3L446.5,392.0 M445.0,395.6L444.8,395.1L444.7,394.6 M444.9,398.4L443.7,397.9L442.4,398.2 M444.3,398.9L443.6,398.3L442.9,397.6L442.1,397.0 M442.9,399.8L442.4,399.1L441.9,398.4 M441.1,401.7L440.5,401.4L439.8,401.3 M439.7,401.7L439.0,400.8L438.0,400.5L437.0,400.2 M438.9,401.0L439.1,401.7L438.8,402.4 M439.8,400.5L440.6,401.3L440.7,402.4 M440.6,399.3L441.1,399.3L441.5,399.5 M441.3,395.1L441.2,394.2L441.1,393.3L440.6,392.5 M439.5,396.3L439.5,395.8L439.7,395.4 M436.8,399.1L436.4,398.0L435.6,397.2L434.8,396.3 M435.8,398.7L436.9,398.2L437.7,397.4 M435.5,396.4L435.9,395.9L436.4,395.4 M434.8,395.9L435.3,395.9L435.8,395.7 M434.9,394.0L435.8,393.8L436.6,394.1L437.5,394.1 M433.7,392.1L435.0,392.2L436.0,391.5 M432.5,390.7L432.9,389.9L433.4,389.1 M431.9,389.3L432.4,388.1L433.3,387.3L433.5,386.0 M448.3,372.9L449.2,372.9L450.0,372.5L450.8,372.0 M448.6,372.1L449.2,372.7L449.4,373.5 M449.3,371.5L449.6,372.3L449.6,373.2 M449.9,369.7L450.2,370.5L450.8,371.2 M450.4,368.7L451.0,369.2L451.3,369.9 M453.0,366.8L453.0,367.3L453.1,367.7 M454.4,365.9L455.1,366.3L455.6,366.9 M457.3,366.1L456.4,366.4L455.8,366.9 M458.4,366.8L457.6,367.6L457.4,368.6L457.3,369.7 M461.6,368.0L461.9,368.7L461.9,369.5 M462.6,367.9L461.6,368.3L460.6,368.0L459.7,367.4 M464.1,369.1L462.9,369.3L462.0,370.2 M462.1,371.3L461.6,370.4L460.7,369.9L459.7,369.7 M460.7,372.2L459.5,372.1L458.5,372.5L457.5,372.9 M459.0,372.1L458.8,371.3L458.4,370.6 M458.6,373.2L458.1,372.8L457.7,372.4 M456.8,373.7L456.4,373.7L456.0,374.0 M455.3,374.8L455.3,374.3L455.6,373.9 M454.7,375.2L454.5,374.0L453.8,372.9 M453.1,375.5L453.9,374.9L454.9,374.8L455.8,374.5 M448.3,374.0L449.1,373.6L449.9,373.3 M635.1,342.7L635.1,343.9L634.6,345.0L633.7,345.8L632.6,346.3L631.9,347.3L630.8,347.7 M637.0,342.8L637.9,343.6L639.1,343.9L640.3,343.4L641.2,342.7L642.0,341.8 M638.7,342.3L639.4,342.8L640.3,343.0L641.1,343.3 M639.5,342.6L639.8,343.7L639.4,344.7L638.8,345.7L638.9,346.8 M642.3,342.4L643.0,342.9L643.8,343.0 M644.2,343.3L645.1,344.1L645.8,344.9L645.9,346.0L646.4,347.1L646.2,348.2L645.7,349.2 M645.2,343.1L645.2,344.3L645.8,345.3L646.6,346.2L647.5,347.0L648.4,347.7L648.9,348.8 M647.3,343.2L647.3,344.2L646.9,345.2L646.4,346.2L646.0,347.1 M648.5,344.8L647.7,345.0L647.0,345.4 M650.3,345.9L649.6,346.4L648.7,346.5 M650.6,346.8L649.9,347.8L649.6,349.0L648.9,350.1L647.8,350.6 M651.0,348.7L649.9,349.0L648.9,349.5L648.3,350.5L647.3,351.0 M651.2,349.7L650.3,350.4L649.7,351.3L649.5,352.4 M652.5,350.0L651.8,349.6L651.0,349.1L650.4,348.5 M652.5,352.2L651.7,353.2L650.4,353.4 M653.4,353.0L652.5,353.7L651.8,354.7L651.9,355.8L652.6,356.8L653.7,357.4 M654.1,353.8L652.9,353.7L651.9,352.8L651.5,351.6L651.9,350.4L652.8,349.4 M655.4,356.6L654.5,356.1L653.6,355.6L652.9,354.9 M655.8,357.5L655.2,358.4L654.5,359.2L653.7,360.0L652.7,360.2L651.6,360.6L650.6,360.6 M655.7,359.7L654.7,359.4L654.1,358.6L654.0,357.5 M656.8,361.5L656.2,362.2L655.6,363.1L655.0,363.9 M657.9,363.1L657.1,364.1L656.9,365.2L656.2,366.2L655.2,366.9L654.5,367.8L653.3,368.1 M658.1,364.9L657.4,364.6L656.6,364.6 M658.8,366.6L658.5,367.5L657.9,368.4 M659.2,367.4L658.0,367.7L656.9,367.3L655.8,367.7L655.0,368.6L653.8,368.9 M659.3,368.3L658.2,367.8L657.3,367.1L656.6,366.2 M659.9,371.1L658.8,370.6L657.6,370.5L656.7,369.8L655.6,369.2L655.1,368.1L654.7,367.0 M660.3,372.0L659.6,372.7L659.2,373.7 M660.8,374.0L660.0,374.9L659.0,375.6L658.2,376.6L657.0,376.9 M661.5,375.0L660.6,375.2L659.6,375.3 M662.1,375.9L661.0,376.1L660.2,376.9L659.2,377.3L658.0,377.1L657.3,376.3 M663.1,377.5L662.0,378.2L661.5,379.3L660.6,380.2L659.3,380.4L658.1,380.4 M663.2,378.4L662.2,377.9L661.5,377.0L660.4,376.7L659.3,376.5 M663.0,379.5L662.1,379.0L661.7,378.0 M662.2,378.6L662.8,377.6L662.7,376.3L662.0,375.3L661.6,374.2L661.2,373.0L660.5,372.0 M660.2,377.9L661.1,377.2L662.2,376.8L663.4,376.9 M660.0,376.7L660.3,375.5L659.9,374.4L659.1,373.5L658.4,372.6L658.3,371.4 M658.4,375.1L659.7,375.0L661.0,374.8L662.2,374.8 M657.3,374.7L657.9,373.7L658.7,372.7L659.1,371.5L659.9,370.6 M655.8,372.5L656.7,371.9L657.3,370.9L658.2,370.1L659.2,369.5 M655.0,372.1L656.3,372.1L657.5,372.5L658.8,372.7L660.1,372.5 M653.5,371.0L654.5,370.8L655.5,370.2L656.0,369.3L656.7,368.4 M652.3,371.2L653.3,370.5L654.5,370.4 M650.8,370.1L650.8,369.0L650.1,368.1L649.1,367.5L648.0,367.5 M649.6,367.9L650.6,368.0L651.5,368.6L651.9,369.6L652.1,370.6 M648.3,367.1L647.7,366.1L646.9,365.4L646.0,364.9L644.9,364.6L643.8,364.4 M646.7,366.8L646.4,365.7L645.6,364.9L644.9,364.0L644.1,363.2 M645.4,365.9L646.4,366.3L647.3,367.0 M645.2,365.0L646.2,365.5L647.3,365.5L648.3,365.8 M645.0,363.5L646.0,362.8L646.8,361.9L647.7,361.0L648.7,360.4L649.3,359.3 M644.5,361.4L645.5,360.6L646.4,359.7L647.4,358.9L647.7,357.7 M641.1,358.2L641.6,357.3L641.8,356.4 M639.8,357.3L639.9,356.1L639.7,355.0L639.1,354.1L638.6,353.0L637.9,352.2 M639.6,356.3L640.5,355.9L641.5,355.8L642.3,355.1L643.0,354.3 M638.3,355.4L639.0,355.2L639.7,355.6 M637.6,354.9L637.8,353.7L637.3,352.6L637.1,351.5 M636.2,353.0L636.5,352.3L636.9,351.7 M635.4,351.5L635.5,350.4L635.0,349.4L634.4,348.5L634.3,347.4 M634.3,351.5L635.5,351.7L636.6,351.3L637.6,350.7L638.7,350.5L639.9,350.7L641.1,350.8 M632.1,348.1L633.0,348.6L633.9,348.5 M632.3,345.8L633.3,346.1L634.1,346.7L634.4,347.7L634.7,348.7 M633.6,344.1L634.2,345.1L634.4,346.2L634.9,347.1L634.9,348.2L635.2,349.3 M677.0,373.4L677.8,374.1L678.9,374.4L680.0,374.5L681.0,375.0 M677.8,373.5L677.1,374.3L676.3,375.1L675.2,375.2 M679.5,374.1L678.9,374.6L678.2,374.9 M680.3,374.5L679.2,375.0L678.1,375.6 M681.3,375.4L680.6,376.3L679.7,376.9L678.7,377.4L677.7,377.7L676.6,377.5L675.5,377.8 M681.4,376.3L680.2,376.4L679.1,376.6L678.0,376.7L676.8,376.9 M683.0,377.0L683.0,377.9L682.8,378.8 M684.0,377.1L683.0,377.6L681.9,377.8 M686.2,379.0L685.4,379.9L684.3,380.3 M687.1,379.4L686.4,379.7L686.0,380.5 M687.8,380.0L688.1,381.1L688.1,382.2 M689.0,381.6L688.2,382.2L687.4,382.8L687.2,383.8L687.1,384.8 M690.4,381.6L690.5,382.3L690.2,383.0 M691.7,383.5L690.9,383.8L690.3,384.3 M694.1,385.8L693.1,386.5L692.0,386.9L690.8,386.7L689.7,386.1L688.8,385.4 M694.6,386.9L694.5,387.8L694.0,388.5 M697.5,388.8L696.9,389.9L696.5,391.0L695.4,391.6L694.6,392.4 M698.8,390.7L697.6,390.5L696.7,389.8L696.5,388.6L696.7,387.4 M702.0,393.6L700.8,393.3L699.7,393.6L698.7,394.0L697.8,394.8 M702.6,395.6L701.5,395.1L700.2,394.9L699.0,395.1L698.0,394.4L697.0,393.7L696.3,392.7 M703.5,396.4L702.6,396.9L701.6,397.0L700.6,396.6 M703.2,399.2L702.5,399.6L702.1,400.2 M703.3,400.7L702.1,400.4L701.0,400.9L699.9,401.1L698.7,400.8L697.5,400.6 M700.9,399.7L701.9,398.9L702.9,398.2L704.1,397.7L705.4,397.5L706.5,396.9 M699.2,400.2L698.9,399.1L698.5,397.9L698.5,396.7L698.2,395.5L698.1,394.3 M698.5,400.9L698.6,399.8L698.4,398.8 M696.8,399.9L696.9,398.8L696.6,397.8L695.7,397.1L695.4,396.1L695.1,395.1 M695.8,401.0L695.2,400.3L695.0,399.6 M694.6,401.2L693.9,400.3L693.8,399.1L694.4,398.1L694.4,397.0L693.8,396.0L693.4,394.9 M694.6,402.3L694.4,401.5L694.6,400.8 M693.3,402.1L693.8,401.1L694.4,400.1 M691.5,401.6L692.4,400.7L693.4,400.0L694.6,399.6L695.7,399.0L696.5,398.1 M690.3,401.5L691.2,401.1L692.2,400.7L693.2,400.5 M688.9,399.8L689.1,398.8L688.8,397.8L688.0,397.1L687.2,396.3L686.3,395.9 M688.5,398.6L688.5,397.9L688.4,397.1 M686.5,396.3L687.3,396.2L688.1,396.1 M684.8,395.3L685.6,394.4L686.5,393.7L687.2,392.7L687.8,391.7 M684.3,394.6L684.6,394.0L685.1,393.4 M682.9,393.7L683.6,393.4L684.3,393.3 M682.8,392.5L683.8,391.9L685.0,391.8L686.2,391.9L687.3,391.8 M681.3,391.8L681.2,390.6L680.9,389.4L679.9,388.6L679.1,387.7L678.8,386.5 M680.1,391.5L680.6,390.4L680.6,389.2L681.2,388.2L681.9,387.2L682.8,386.5L683.8,385.8 M679.2,388.6L680.4,388.9L681.5,389.5 M678.4,387.2L679.3,386.8L679.9,386.0L680.8,385.8 M678.8,386.4L679.6,386.3L680.3,385.8 M676.8,383.3L678.0,383.6L679.1,384.1L680.3,384.2L681.5,384.3 M676.5,382.3L677.7,382.2L678.8,381.9L679.9,381.4L681.0,380.9 M675.8,380.5L676.2,379.5L676.4,378.5L676.6,377.4 M675.4,379.6L676.7,379.5L677.9,379.5L679.2,379.3L680.5,379.3L681.5,378.5 M674.5,378.0L675.3,378.8L676.2,379.5L677.2,380.2L677.9,381.0 M674.9,377.1L675.5,376.1L675.3,375.0L675.6,373.9L676.5,373.3L677.6,373.1 M674.6,375.5L675.8,375.6L677.0,375.3L678.2,375.0L679.4,374.7L680.6,374.8L681.8,374.9" fill="none" stroke="#232323" stroke-width="1" stroke-linejoin="round" stroke-linecap="round"/>
<g fill="#fff" stroke="#232323" stroke-width="0.9" stroke-linejoin="round">
<path d="M380.5,189.2 L383.5,189.6 L385.9,190.2 L387.7,190.8 L388.0,193.1 L387.1,194.9 L384.7,195.2 L382.6,194.6 L381.1,192.8 L379.9,191.3Z"/>
<path d="M336.8,192.7 L338.9,192.3 L341.8,193.7 L341.1,195.1 L338.7,194.7Z"/>
<path d="M326.7,211.0 L328.9,210.0 L331.0,211.0 L330.6,213.5 L328.1,214.0Z"/>
<path d="M333.9,213.5 L336.1,214.6 L338.7,214.3 L339.7,215.8 L337.2,216.3 L334.6,215.3Z"/>
<path d="M335.4,307.4 L338.3,306.7 L341.2,306.0 L342.6,308.1 L343.1,311.0 L341.2,312.4 L339.8,310.3 L337.6,308.9 L335.9,309.6Z"/>
<path d="M500.0,324.1 L501.5,323.7 L503.0,324.4 L502.7,325.8 L500.9,325.9Z"/>
<path d="M500.9,328.6 L502.4,328.2 L503.4,329.5 L503.0,331.2 L501.5,330.7Z"/>
<path d="M497.0,314.0 L498.5,313.1 L499.7,314.0 L498.8,315.2 L497.6,315.0Z"/>
<path d="M629.0,333.1 L632.0,332.9 L634.5,333.9 L635.3,335.8 L633.2,335.6 L631.1,334.8Z"/>
</g>
<path d="M397.0,107.3L397.3,108.6L397.6,109.9L397.7,110.9L397.3,111.6L398.2,112.8L398.3,113.3L398.1,114.4L398.3,115.7L398.0,116.4 M395.5,111.9L396.4,112.0L397.9,111.0L399.0,110.7L400.0,110.4L400.5,110.8L401.8,109.9 M374.0,119.6L375.1,119.1L375.1,118.4L376.0,117.4L376.3,116.8L377.3,116.0L378.1,114.6L378.5,113.9L379.2,113.2L380.2,113.0L380.8,112.4L382.0,111.5L383.6,111.6L384.4,111.6L386.0,111.2L387.4,111.2 M660.9,342.7L660.5,342.1L659.3,341.1L659.1,340.0L657.9,338.5L657.2,338.3L656.0,338.6L655.4,339.4L653.8,338.8L652.8,339.2L651.3,339.2L650.7,338.7L648.7,338.1L648.1,336.6L647.8,336.1L646.9,335.1L646.5,333.5L645.8,332.2L645.0,331.1L645.2,330.8L644.4,328.9L644.9,328.3L644.0,327.0 M628.8,332.5L627.8,332.2L626.6,331.3L625.1,331.2L624.0,330.3L623.7,330.2L622.5,331.1L621.3,331.1 M632.0,328.2L632.4,328.8L633.1,329.9L634.0,330.3L633.3,331.2L631.9,331.4 M622.9,331.4L623.8,332.1L624.7,332.1L625.6,332.5L626.5,333.7L627.8,334.1L628.2,334.6L628.7,335.3L630.1,336.6L629.5,337.6L629.6,338.6L629.2,339.7L628.7,340.8 M640.1,348.1L640.8,348.8L642.2,349.6L642.7,350.5L644.0,350.9L644.5,351.3L645.8,351.8L647.1,352.3L648.3,352.7L649.1,351.8L650.5,351.3L651.3,350.6L652.5,351.5L653.3,352.8L653.6,353.5 M641.2,342.7L641.9,343.3L643.7,343.2L644.6,343.7L645.7,343.5L646.5,344.5L647.2,345.1L648.0,346.1L648.8,346.7 M666.6,363.9L666.5,364.6L667.3,366.2L667.5,367.3L668.3,367.8L668.7,368.9L668.8,369.7L669.6,370.7L670.1,371.5L670.8,372.9L671.5,374.2L671.7,375.5L672.0,376.2 M684.9,361.2L685.3,362.0L685.8,363.2L686.7,363.3L687.6,364.3L688.2,365.3L688.8,366.8L689.7,367.1L690.3,368.2L690.6,368.6L691.4,369.8L692.3,371.3L692.5,371.8L693.3,372.6L693.1,374.2 M711.6,387.9L711.7,386.6L711.6,386.2L711.3,384.7L711.1,383.6L711.5,382.6L711.3,382.0L710.8,380.4L710.9,379.6L710.2,378.4L710.6,377.5L709.8,376.4L709.5,375.5 M704.2,387.9L704.4,386.6L705.0,385.9L704.6,384.4L704.7,383.6L705.1,381.7L704.5,380.5 M714.3,382.0L715.1,382.8L715.0,384.0L715.4,385.2L715.7,385.8L716.0,387.0L716.0,388.0L715.9,389.2 M704.5,370.3L703.3,369.9L702.5,369.8L700.7,369.2L700.1,369.6L699.4,369.1L697.6,369.2L696.9,368.9L696.2,369.3L695.0,370.0L693.9,369.9 M707.1,373.0L708.1,373.7L708.2,375.3L708.6,376.3L709.9,376.7L710.4,377.8L711.7,378.0 M706.0,381.4L706.8,382.6L707.7,383.6L707.8,384.8L708.8,385.4L708.7,387.0 M712.5,389.1L713.1,388.1L712.7,387.0L713.9,386.0L713.9,384.0L714.1,382.9L714.1,382.4L714.2,380.4 M677.3,377.3L677.9,378.4L678.5,378.9L679.4,379.2L680.3,379.8L680.6,380.8L681.3,381.3L682.4,382.6L683.4,382.8L683.7,383.6L684.6,384.5L685.6,385.1L685.6,386.1L686.4,386.8L687.4,387.8L688.2,388.2L688.6,388.9L689.3,389.8L690.3,389.9L690.7,390.9L691.9,391.4L692.6,392.6L692.8,393.3L693.5,393.5L694.7,394.3" fill="none" stroke="#232323" stroke-width="1" stroke-linejoin="round" stroke-linecap="round"/>
<path d="M681.3,361.3L682.8,361.6L683.4,363.1L681.9,363.1Z" fill="#fff" stroke="#232323" stroke-width="0.6"/>
<path d="M680.6,361.2L682.7,360.6L683.8,362.8L681.6,363.3Z" fill="#fff" stroke="#232323" stroke-width="0.6"/>
<g stroke="#ff0000" stroke-width="2" stroke-linecap="butt">
<line x1="349.4" y1="142.9" x2="329.4" y2="135.9"/>
<line x1="532" y1="123.6" x2="550" y2="120.4"/>
<line x1="322" y1="203" x2="316.3" y2="208.3"/>
<line x1="283.8" y1="238.5" x2="291.3" y2="249.6"/>
<line x1="311.3" y1="320" x2="328.7" y2="313.2"/>
<line x1="424.8" y1="354.2" x2="424.1" y2="342.4"/>
<line x1="568.9" y1="313.9" x2="551.6" y2="322.5"/>
</g>
<g fill="#ff0000" stroke="#5a0000" stroke-width="0.6">
<circle cx="349.4" cy="142.9" r="2.6"/>
<circle cx="532" cy="123.6" r="2.6"/>
<circle cx="322" cy="203" r="2.6"/>
<circle cx="283.8" cy="238.5" r="2.6"/>
<circle cx="311.3" cy="320" r="2.6"/>
<circle cx="424.8" cy="354.2" r="2.6"/>
<circle cx="568.9" cy="313.9" r="2.6"/>
</g>
</g>
<g><circle cx="16.6" cy="14.6" r="6.1" fill="none" stroke="#6aa32a" stroke-width="3.1"/><line x1="17" y1="15" x2="22.6" y2="20.4" stroke="#5d9a32" stroke-width="3.4" stroke-linecap="round"/><line x1="16.2" y1="14.2" x2="18.3" y2="16.2" stroke="#f08a1d" stroke-width="2.6" stroke-linecap="round"/><line x1="18.3" y1="16.2" x2="19.2" y2="17.1" stroke="#d9c02a" stroke-width="2.8"/></g>
<g stroke="#000" stroke-width="1" fill="none"><line x1="715" y1="15.5" x2="725" y2="15.5"/><rect x="760.5" y="10.5" width="9" height="9"/><path d="M806,10 L816,20 M816,10 L806,20" stroke-width="1.1"/></g>
<g fill="#c4c4c4"><rect x="6.0" y="63.0" width="1" height="1"/><rect x="6.0" y="66.0" width="1" height="1"/><rect x="6.0" y="69.0" width="1" height="1"/><rect x="6.0" y="72.0" width="1" height="1"/><rect x="6.0" y="75.0" width="1" height="1"/><rect x="6.0" y="78.0" width="1" height="1"/><rect x="9.0" y="63.0" width="1" height="1"/><rect x="9.0" y="66.0" width="1" height="1"/><rect x="9.0" y="69.0" width="1" height="1"/><rect x="9.0" y="72.0" width="1" height="1"/><rect x="9.0" y="75.0" width="1" height="1"/><rect x="9.0" y="78.0" width="1" height="1"/></g>
<g fill="#c4c4c4"><rect x="274.0" y="63.0" width="1" height="1"/><rect x="274.0" y="66.0" width="1" height="1"/><rect x="274.0" y="69.0" width="1" height="1"/><rect x="274.0" y="72.0" width="1" height="1"/><rect x="274.0" y="75.0" width="1" height="1"/><rect x="274.0" y="78.0" width="1" height="1"/><rect x="277.0" y="63.0" width="1" height="1"/><rect x="277.0" y="66.0" width="1" height="1"/><rect x="277.0" y="69.0" width="1" height="1"/><rect x="277.0" y="72.0" width="1" height="1"/><rect x="277.0" y="75.0" width="1" height="1"/><rect x="277.0" y="78.0" width="1" height="1"/></g>
<g fill="#c4c4c4"><rect x="467.0" y="63.0" width="1" height="1"/><rect x="467.0" y="66.0" width="1" height="1"/><rect x="467.0" y="69.0" width="1" height="1"/><rect x="467.0" y="72.0" width="1" height="1"/><rect x="467.0" y="75.0" width="1" height="1"/><rect x="467.0" y="78.0" width="1" height="1"/><rect x="470.0" y="63.0" width="1" height="1"/><rect x="470.0" y="66.0" width="1" height="1"/><rect x="470.0" y="69.0" width="1" height="1"/><rect x="470.0" y="72.0" width="1" height="1"/><rect x="470.0" y="75.0" width="1" height="1"/><rect x="470.0" y="78.0" width="1" height="1"/></g>
<g fill="#c4c4c4"><rect x="754.0" y="63.0" width="1" height="1"/><rect x="754.0" y="66.0" width="1" height="1"/><rect x="754.0" y="69.0" width="1" height="1"/><rect x="754.0" y="72.0" width="1" height="1"/><rect x="754.0" y="75.0" width="1" height="1"/><rect x="754.0" y="78.0" width="1" height="1"/><rect x="757.0" y="63.0" width="1" height="1"/><rect x="757.0" y="66.0" width="1" height="1"/><rect x="757.0" y="69.0" width="1" height="1"/><rect x="757.0" y="72.0" width="1" height="1"/><rect x="757.0" y="75.0" width="1" height="1"/><rect x="757.0" y="78.0" width="1" height="1"/></g>
<rect x="83.1" y="62" width="1" height="19" fill="#d0d0d0"/>
<rect x="155.9" y="62" width="1" height="19" fill="#d0d0d0"/>
<rect x="229.3" y="62" width="1" height="19" fill="#d0d0d0"/>
<rect x="676.2" y="62" width="1" height="19" fill="#d0d0d0"/>
<g><rect x="18.2" y="59.2" width="6.45" height="6.35" fill="#24426b"/><rect x="24.6" y="59.2" width="6.45" height="6.35" fill="#6b96c8"/><rect x="31.0" y="59.2" width="6.45" height="6.35" fill="#24426b"/><rect x="18.2" y="65.5" width="6.45" height="6.35" fill="#6b96c8"/><rect x="24.6" y="65.5" width="6.45" height="6.35" fill="#24426b"/><rect x="31.0" y="65.5" width="6.45" height="6.35" fill="#6b96c8"/><rect x="18.2" y="71.8" width="6.45" height="6.35" fill="#24426b"/><rect x="24.6" y="71.8" width="6.45" height="6.35" fill="#6b96c8"/><rect x="33.2" y="74" width="9" height="9" rx="1.6" fill="#4f8f4b" stroke="#3e7a3c" stroke-width="0.5"/><path d="M37.7,75.6 V81.4 M34.800000000000004,78.5 H40.6" stroke="#fff" stroke-width="1.8"/></g>
<g><path d="M53.4,61.6 L59.9,75.9 L66.6,61.6 L72.8,61.6" fill="none" stroke="#2c3e5a" stroke-width="1.6"/><path d="M51.3,61.6 L53.4,59.5 L55.5,61.6 L53.4,63.7Z" fill="#fff" stroke="#2c3e5a" stroke-width="0.8"/><path d="M64.5,61.6 L66.6,59.5 L68.69999999999999,61.6 L66.6,63.7Z" fill="#fff" stroke="#2c3e5a" stroke-width="0.8"/><path d="M70.7,61.6 L72.8,59.5 L74.89999999999999,61.6 L72.8,63.7Z" fill="#fff" stroke="#2c3e5a" stroke-width="0.8"/><circle cx="59.9" cy="76.2" r="1.7" fill="#fff" stroke="#2c3e5a" stroke-width="0.9"/><rect x="66.2" y="74" width="9" height="9" rx="1.6" fill="#4f8f4b" stroke="#3e7a3c" stroke-width="0.5"/><path d="M70.7,75.6 V81.4 M67.8,78.5 H73.60000000000001" stroke="#fff" stroke-width="1.8"/></g>
<path d="M95.8,62 L95.8,79.8 L110.4,70.9Z" fill="#5a8f54" stroke="#7fae78" stroke-width="1" stroke-linejoin="round"/>
<g><path d="M127.8,79.2 L127.8,63 Q127.8,61 130,61 L145.5,61 Q147.2,61.2 147.2,63 L147.2,64.6 L143.8,64.6 L143.8,77 Q143.6,81 140.4,81 L128,81 Q126.4,80.8 126.6,79.2 Z" fill="#e6e6e6" stroke="#9a9a9a" stroke-width="0.9"/><path d="M126.6,79 H140.2 Q141,81 139.5,81.2" fill="#f4f4f4" stroke="#9a9a9a" stroke-width="0.8"/><path d="M143.8,64.6 Q143.6,61.4 145.6,61.2" fill="none" stroke="#9a9a9a" stroke-width="0.8"/><rect x="137.4" y="72" width="11" height="10.6" rx="1.4" fill="#366582"/><path d="M139.6,74.4 V80.2 M139.6,74.4 H141 M139.6,80.2 H141 M141.6,77.3 H146 M144.2,75.2 L146.4,77.3 L144.2,79.4" fill="none" stroke="#fff" stroke-width="1.1"/></g>
<g><g transform="translate(164.4,60.3)"><defs></defs><path d="M1,11 C0.5,4.5 6,0.2 12.5,0.2 C19.5,0.2 24,4.5 23.3,10.5 C22.8,16 18,21 11.5,20.8 C5,20.6 1.3,16.5 1,11Z" fill="#2f568c"/><path d="M5.5,3.2 L10.5,1 L13,5 L8,8 Z M15,1.2 L20.5,3.5 L21.5,8 L17,6.5 Z M2,9 L7,8.5 L8.5,13.5 L3,14.5 Z M10,9 L16,7.5 L17.5,12.5 L11.5,14 Z M5,16 L10.5,15 L12.5,19.5 L8,20 Z M14,14.8 L19.5,13.2 L20,17 L16,19.5Z" fill="#5d8bc4" opacity="0.85"/></g><circle cx="181.4" cy="63" r="2.6" fill="#e8141c" stroke="#8a0a10" stroke-width="0.6"/><circle cx="172.20000000000002" cy="67.6" r="2.6" fill="#e8141c" stroke="#8a0a10" stroke-width="0.6"/><circle cx="169.4" cy="78.4" r="2.6" fill="#e8141c" stroke="#8a0a10" stroke-width="0.6"/><rect x="177.0" y="71.7" width="11" height="10.6" rx="1.4" fill="#366582"/><path d="M182.5,78.7 V73.9 M180.4,75.9 L182.5,73.7 L184.6,75.9 M179.2,77.7 V80.3 H185.8 V77.7" fill="none" stroke="#fff" stroke-width="1.1"/></g>
<g><g transform="translate(197.2,60.3)"><defs></defs><path d="M1,11 C0.5,4.5 6,0.2 12.5,0.2 C19.5,0.2 24,4.5 23.3,10.5 C22.8,16 18,21 11.5,20.8 C5,20.6 1.3,16.5 1,11Z" fill="#2f568c"/><path d="M5.5,3.2 L10.5,1 L13,5 L8,8 Z M15,1.2 L20.5,3.5 L21.5,8 L17,6.5 Z M2,9 L7,8.5 L8.5,13.5 L3,14.5 Z M10,9 L16,7.5 L17.5,12.5 L11.5,14 Z M5,16 L10.5,15 L12.5,19.5 L8,20 Z M14,14.8 L19.5,13.2 L20,17 L16,19.5Z" fill="#5d8bc4" opacity="0.85"/></g><circle cx="214.2" cy="63" r="2.6" fill="#e8141c" stroke="#8a0a10" stroke-width="0.6"/><circle cx="205.0" cy="67.6" r="2.6" fill="#e8141c" stroke="#8a0a10" stroke-width="0.6"/><circle cx="202.2" cy="78.4" r="2.6" fill="#e8141c" stroke="#8a0a10" stroke-width="0.6"/><rect x="209.79999999999998" y="71.7" width="11" height="10.6" rx="1.4" fill="#366582"/><path d="M215.29999999999998,73.5 V78.3 M213.2,76.3 L215.29999999999998,78.5 L217.39999999999998,76.3 M211.99999999999997,77.7 V80.3 H218.6 V77.7" fill="none" stroke="#fff" stroke-width="1.1"/></g>
<path d="M256.29,68.93 L259.41,69.29 L259.41,72.11 L256.29,72.47 L255.38,74.67 L257.33,77.13 L255.33,79.13 L252.87,77.18 L250.67,78.09 L250.31,81.21 L247.49,81.21 L247.13,78.09 L244.93,77.18 L242.47,79.13 L240.47,77.13 L242.42,74.67 L241.51,72.47 L238.39,72.11 L238.39,69.29 L241.51,68.93 L242.42,66.73 L240.47,64.27 L242.47,62.27 L244.93,64.22 L247.13,63.31 L247.49,60.19 L250.31,60.19 L250.67,63.31 L252.87,64.22 L255.33,62.27 L257.33,64.27 L255.38,66.73Z" fill="#f2dd1c" stroke="#d4b80c" stroke-width="0.8" stroke-linejoin="round"/><circle cx="248.9" cy="70.7" r="3.3" fill="#fbfbf4" stroke="#d4b80c" stroke-width="0.8"/>
<g><g transform="translate(285.9,59.8)"><ellipse cx="12" cy="10.5" rx="12" ry="10.3" fill="#28497c"/><path d="M3,4.5 Q8,1 13,1.2 L14,3.5 Q8,3.5 4,7 Z M16,1.6 Q21,3 23,7 L20.5,8 Q19,4.8 15.5,3.8 Z M1,10 Q1,14 4,17.5 L6.5,16 Q4,13.5 4,9.5 Z M7,18.5 Q11,21 16,20.2 L15,17.6 Q11,18.4 8.5,16.5 Z M18,18.8 Q22.5,16 23.6,11 L21,11 Q20.5,14.5 17,16.8Z" fill="#6f9bd0" opacity="0.75"/><g stroke="#e8141c" stroke-width="1.2"><line x1="10.1" y1="1.6" x2="10.1" y2="16.2"/><line x1="2.8" y1="8.8" x2="17.4" y2="8.8"/></g><circle cx="10.1" cy="8.8" r="5" fill="none" stroke="#1d3a66" stroke-width="1.1"/><path d="M10.1,5.4 L13.5,8.8 L10.1,12.2 L6.7,8.8Z" fill="#e8141c"/></g><rect x="298.9" y="71.8" width="11.2" height="10.8" rx="1.4" fill="#c4a81c"/><line x1="300.90" y1="77.20" x2="308.10" y2="77.20" stroke="#fff" stroke-width="1.2"/><line x1="301.95" y1="74.65" x2="307.05" y2="79.75" stroke="#fff" stroke-width="1.2"/><line x1="304.50" y1="73.60" x2="304.50" y2="80.80" stroke="#fff" stroke-width="1.2"/><line x1="307.05" y1="74.65" x2="301.95" y2="79.75" stroke="#fff" stroke-width="1.2"/><circle cx="304.5" cy="77.2" r="2.1" fill="#fff"/><circle cx="304.5" cy="77.2" r="0.9" fill="#c4a81c"/></g>
<g><g transform="translate(319,59.8)"><ellipse cx="12" cy="10.5" rx="12" ry="10.3" fill="#28497c"/><path d="M3,4.5 Q8,1 13,1.2 L14,3.5 Q8,3.5 4,7 Z M16,1.6 Q21,3 23,7 L20.5,8 Q19,4.8 15.5,3.8 Z M1,10 Q1,14 4,17.5 L6.5,16 Q4,13.5 4,9.5 Z M7,18.5 Q11,21 16,20.2 L15,17.6 Q11,18.4 8.5,16.5 Z M18,18.8 Q22.5,16 23.6,11 L21,11 Q20.5,14.5 17,16.8Z" fill="#6f9bd0" opacity="0.75"/><g stroke="#e8141c" stroke-width="1.2"><line x1="10.1" y1="1.6" x2="10.1" y2="16.2"/><line x1="2.8" y1="8.8" x2="17.4" y2="8.8"/></g><circle cx="10.1" cy="8.8" r="5" fill="none" stroke="#1d3a66" stroke-width="1.1"/><path d="M10.1,5.4 L13.5,8.8 L10.1,12.2 L6.7,8.8Z" fill="#e8141c"/></g><rect x="331.9" y="71.8" width="11.2" height="10.8" rx="1.4" fill="#d9646c"/><path d="M334.7,74.5 L340.3,80 M340.3,74.5 L334.7,80" stroke="#fff" stroke-width="2"/></g>
<g><g transform="translate(352,59.8)"><ellipse cx="12" cy="10.5" rx="12" ry="10.3" fill="#28497c"/><path d="M3,4.5 Q8,1 13,1.2 L14,3.5 Q8,3.5 4,7 Z M16,1.6 Q21,3 23,7 L20.5,8 Q19,4.8 15.5,3.8 Z M1,10 Q1,14 4,17.5 L6.5,16 Q4,13.5 4,9.5 Z M7,18.5 Q11,21 16,20.2 L15,17.6 Q11,18.4 8.5,16.5 Z M18,18.8 Q22.5,16 23.6,11 L21,11 Q20.5,14.5 17,16.8Z" fill="#6f9bd0" opacity="0.75"/><g stroke="#e8141c" stroke-width="1.2"><line x1="10.1" y1="1.6" x2="10.1" y2="16.2"/><line x1="2.8" y1="8.8" x2="17.4" y2="8.8"/></g><circle cx="10.1" cy="8.8" r="5" fill="none" stroke="#1d3a66" stroke-width="1.1"/><path d="M10.1,5.4 L13.5,8.8 L10.1,12.2 L6.7,8.8Z" fill="#e8141c"/></g><rect x="364.9" y="71.8" width="11.2" height="10.8" rx="1.4" fill="#355c74"/><path d="M366.6,75.8 H370.4 V73.6 L374.6,77.2 L370.4,80.8 V78.6 H366.6Z" fill="#fff"/></g>
<rect x="381.5" y="56.5" width="31" height="30" rx="2.5" fill="#dddddd" stroke="#c3c3c3"/>
<rect x="414.5" y="56.5" width="10" height="30" rx="2.5" fill="#dddddd" stroke="#c3c3c3"/>
<path d="M416.2,69.8 H422.2 L419.2,73.2Z" fill="#3c3c3c"/>
<g transform="translate(398.2,72) rotate(-45)"><path d="M-8.4,-8.8 L-4.2,-8.8 L-4.2,0.6 A4.2,4.2 0 0 0 4.2,0.6 L4.2,-8.8 L8.4,-8.8 L8.4,0.6 A8.4,8.4 0 0 1 -8.4,0.6Z" fill="#d0121a" stroke="#9c0c12" stroke-width="0.6"/><rect x="-8.4" y="-8.8" width="4.2" height="3.4" fill="#f4f4f4" stroke="#b8a0a0" stroke-width="0.4"/><rect x="4.2" y="-8.8" width="4.2" height="3.4" fill="#f4f4f4" stroke="#b8a0a0" stroke-width="0.4"/></g>
<g><rect x="446.6" y="60.6" width="6.4" height="20.4" fill="#f1dc4c" stroke="#c7ac1c" stroke-width="0.7"/><line x1="448" y1="62.6" x2="453" y2="62.6" stroke="#a68c10" stroke-width="0.6"/><line x1="449.5" y1="64.8" x2="453" y2="64.8" stroke="#a68c10" stroke-width="0.6"/><line x1="448" y1="67.0" x2="453" y2="67.0" stroke="#a68c10" stroke-width="0.6"/><line x1="449.5" y1="69.2" x2="453" y2="69.2" stroke="#a68c10" stroke-width="0.6"/><line x1="448" y1="71.4" x2="453" y2="71.4" stroke="#a68c10" stroke-width="0.6"/><line x1="449.5" y1="73.6" x2="453" y2="73.6" stroke="#a68c10" stroke-width="0.6"/><line x1="448" y1="75.8" x2="453" y2="75.8" stroke="#a68c10" stroke-width="0.6"/><line x1="449.5" y1="78.0" x2="453" y2="78.0" stroke="#a68c10" stroke-width="0.6"/><path d="M430.8,60.8 L430.8,82 L453.2,82Z" fill="#f7a35e" stroke="#c26a2c" stroke-width="1" stroke-linejoin="round"/><path d="M435.2,71.6 L435.2,77.8 L441.8,77.8Z" fill="#fff" stroke="#c26a2c" stroke-width="0.8" stroke-linejoin="round"/></g>
<rect x="475.5" y="56.5" width="31" height="30" rx="2.5" fill="#dddddd" stroke="#c3c3c3"/>
<path d="M489.4,81.2 C488,78.5 485.5,74.5 483.6,70.8 C482.2,68.2 482.4,66.4 483.6,66.2 C485,66 486.2,68 487.6,70.4 L487.8,61.2 C487.8,59 490.6,59 490.7,61.2 L490.9,67.5 L491.2,62.4 C491.3,60.6 494,60.8 494,62.6 L494.1,68 L494.5,64 C494.6,62.4 497,62.6 497,64.4 L497,69 L497.5,66 C497.7,64.4 499.8,64.6 499.8,66.4 L499.6,73 C499.4,76.5 498.4,79 497.7,81.2 Z" fill="#fff" stroke="#111" stroke-width="1.1" stroke-linejoin="round"/>
<g><line x1="518.78" y1="76.15" x2="513.2" y2="81.6" stroke="#7a6a20" stroke-width="3.4" stroke-linecap="butt"/><line x1="518.49" y1="76.43" x2="513.56" y2="81.25" stroke="#efc823" stroke-width="2.2"/><line x1="520.42" y1="74.54" x2="518.35" y2="76.57" stroke="#222" stroke-width="2.6"/><circle cx="526.5" cy="68.6" r="8.2" fill="#f3f3f3" fill-opacity="0.85" stroke="#8c8c8c" stroke-width="1.1"/><path d="M526.5,63.2 V74 M521.1,68.6 H531.9" stroke="#4a7ab8" stroke-width="2.3"/></g>
<g><line x1="551.88" y1="76.15" x2="546.3" y2="81.6" stroke="#7a6a20" stroke-width="3.4" stroke-linecap="butt"/><line x1="551.59" y1="76.43" x2="546.66" y2="81.25" stroke="#efc823" stroke-width="2.2"/><line x1="553.52" y1="74.54" x2="551.45" y2="76.57" stroke="#222" stroke-width="2.6"/><circle cx="559.6" cy="68.6" r="8.2" fill="#f3f3f3" fill-opacity="0.85" stroke="#8c8c8c" stroke-width="1.1"/><path d="M554.2,68.6 H565" stroke="#4a7ab8" stroke-width="2.3"/></g>
<rect x="580.6" y="62" width="8" height="12" fill="#e4e4e4" stroke="#8c8c8c" stroke-width="0.9"/>
<g><line x1="584.87" y1="75.77" x2="579" y2="81.6" stroke="#7a6a20" stroke-width="3.4" stroke-linecap="butt"/><line x1="584.58" y1="76.06" x2="579.35" y2="81.25" stroke="#efc823" stroke-width="2.2"/><line x1="586.50" y1="74.15" x2="584.44" y2="76.20" stroke="#222" stroke-width="2.6"/><circle cx="593.1" cy="67.6" r="9" fill="#f3f3f3" fill-opacity="0.85" stroke="#8c8c8c" stroke-width="1.1"/><line x1="593.3" y1="59.4" x2="593.3" y2="75.8" stroke="#c9c9c9" stroke-width="0.9"/></g>
<g><line x1="617.87" y1="76.03" x2="612" y2="81.6" stroke="#7a6a20" stroke-width="3.4" stroke-linecap="butt"/><line x1="617.58" y1="76.31" x2="612.36" y2="81.26" stroke="#efc823" stroke-width="2.2"/><line x1="619.53" y1="74.45" x2="617.43" y2="76.45" stroke="#222" stroke-width="2.6"/><circle cx="625.7" cy="68.6" r="8.2" fill="#f3f3f3" fill-opacity="0.85" stroke="#8c8c8c" stroke-width="1.1"/></g>
<rect x="624.3" y="72" width="10.6" height="10.2" fill="#3f7fc6"/><path d="M632.4,74.2 L627,77.1 L632.4,80" fill="none" stroke="#fff" stroke-width="1.5"/>
<g opacity="0.35"><line x1="650.16" y1="75.84" x2="644.6" y2="81.4" stroke="#7a6a20" stroke-width="3.4" stroke-linecap="butt"/><line x1="649.88" y1="76.12" x2="644.95" y2="81.05" stroke="#efc823" stroke-width="2.2"/><line x1="651.79" y1="74.21" x2="649.74" y2="76.26" stroke="#222" stroke-width="2.6"/><circle cx="657.8" cy="68.2" r="8.2" fill="#f3f3f3" fill-opacity="0.85" stroke="#8c8c8c" stroke-width="1.1"/></g>
<g opacity="0.45"><rect x="657.4" y="72" width="10.4" height="9.8" fill="#aab4c0"/><path d="M660.2,74.2 L665.4,76.9 L660.2,79.6" fill="none" stroke="#fff" stroke-width="1.4"/></g>
<g fill="none" stroke="#2b2b2b" stroke-width="1.1"><rect x="686.6" y="61.6" width="19.6" height="18.6"/><rect x="691.2" y="66.2" width="10.4" height="9.6"/><path d="M686.6,61.6 L691.2,66.2 M706.2,61.6 L701.6,66.2 M686.6,80.2 L691.2,75.8 M706.2,80.2 L701.6,75.8" stroke-width="0.9"/></g>
<path d="M692.6,73.4 C692,66.6 695.4,64.2 701,64.4 L701,60.6 L708.2,66 L701,71.4 L701,68 C697.6,67.8 696,69 696.2,73.4 Z" fill="#ee7a2c" stroke="#c85e18" stroke-width="0.5"/>
<g fill="none" stroke="#2b2b2b" stroke-width="1.1"><rect x="719.4" y="61.6" width="19.6" height="18.6"/><rect x="724.0" y="66.2" width="10.4" height="9.6"/><path d="M719.4,61.6 L724.0,66.2 M739.0,61.6 L734.4,66.2 M719.4,80.2 L724.0,75.8 M739.0,80.2 L734.4,75.8" stroke-width="0.9"/></g>
<path d="M717.4,64.6 C719,58.6 728.6,58 731,64.4 L731.4,68.2 L735,68.2 L729.4,75.2 L723.6,68.2 L727.4,68.2 C727,63.6 721.8,63.2 720.6,66 Z" fill="#ee7a2c" stroke="#c85e18" stroke-width="0.5"/>
<path d="M766.5,82.3 C768.0,75 767.5,61 770.5,60.4 C773.5,61 775.0,70 775.6,82.3Z" fill="#d6ddd1"/><path d="M775.3,82.3 L775.3,64 C775.6,60.5 777.0,60 777.6,62 C779.0,70 781.0,80.5 790.0,82.3Z" fill="#e4e4e4" stroke="#dadada" stroke-width="0.4"/>
<path d="M766,70.3 L770.6,65.6 V68.6 H785.4 V65.6 L790,70.3 L785.4,75 V72 H770.6 V75Z" fill="#e9e9e9" fill-opacity="0.6" stroke="#d4d4d4" stroke-width="0.6"/>
<path d="M799.3,82.3 C800.8,75 800.3,61 803.3,60.4 C806.3,61 807.8,70 808.4,82.3Z" fill="#d6ddd1"/><path d="M808.0999999999999,82.3 L808.0999999999999,64 C808.4,60.5 809.8,60 810.4,62 C811.8,70 813.8,80.5 822.8,82.3Z" fill="#e4e4e4" stroke="#dadada" stroke-width="0.4"/>
<g fill="none" stroke="#4a4a4a"><rect x="807.5" y="474.5" width="10" height="10.4" rx="1.8"/><rect x="821.5" y="474.5" width="10" height="10.4" rx="1.8"/><rect x="811.4" y="477.2" width="4.4" height="3.6" stroke-width="0.9"/><rect x="809.4" y="479.2" width="4.4" height="3.8" stroke-width="0.9" fill="#f0f0f0"/><path d="M824,477 L829,482.4 M829,477 L824,482.4" stroke="#2a2a2a" stroke-width="1.7"/></g>
<g fill="#b4b4b4"><rect x="411" y="466" width="1" height="1"/><rect x="414" y="466" width="1" height="1"/><rect x="417" y="466" width="1" height="1"/><rect x="420" y="466" width="1" height="1"/><rect x="423" y="466" width="1" height="1"/><rect x="426" y="466" width="1" height="1"/><rect x="429" y="466" width="1" height="1"/></g>
<g fill="#b6b6b6"><rect x="831" y="694" width="1.2" height="1.2"/><rect x="828" y="697" width="1.2" height="1.2"/><rect x="831" y="697" width="1.2" height="1.2"/><rect x="825" y="700" width="1.2" height="1.2"/><rect x="828" y="700" width="1.2" height="1.2"/><rect x="831" y="700" width="1.2" height="1.2"/><rect x="822" y="703" width="1.2" height="1.2"/><rect x="825" y="703" width="1.2" height="1.2"/><rect x="828" y="703" width="1.2" height="1.2"/><rect x="831" y="703" width="1.2" height="1.2"/></g>
<path d="M60.2,496.6 H67 L63.6,500Z" fill="#4d4d4d"/>
<rect x="421" y="687" width="12" height="15" fill="#ececec"/><path d="M423.6,693.2 L426.4,689.8 L429.2,693.2Z M423.6,695.8 L426.4,699.2 L429.2,695.8Z" fill="#444"/>
<path d="M8.2,519.3 L11.3,523.2 L15.2,515.2" fill="none" stroke="#000" stroke-width="2" stroke-linejoin="miter"/>
<path d="M8.2,539.3 L11.3,543.2 L15.2,535.2" fill="none" stroke="#000" stroke-width="2" stroke-linejoin="miter"/>
<path d="M8.2,559.3 L11.3,563.2 L15.2,555.2" fill="none" stroke="#000" stroke-width="2" stroke-linejoin="miter"/>
<path d="M8.2,579.3 L11.3,583.2 L15.2,575.2" fill="none" stroke="#000" stroke-width="2" stroke-linejoin="miter"/>
<path d="M8.2,599.3 L11.3,603.2 L15.2,595.2" fill="none" stroke="#000" stroke-width="2" stroke-linejoin="miter"/>
<path d="M8.2,619.3 L11.3,623.2 L15.2,615.2" fill="none" stroke="#000" stroke-width="2" stroke-linejoin="miter"/>
<path d="M8.2,639.3 L11.3,643.2 L15.2,635.2" fill="none" stroke="#000" stroke-width="2" stroke-linejoin="miter"/>
</svg>
<div id="bT" class="abs"></div><div id="bL" class="abs"></div><div id="bR" class="abs"></div><div id="bB" class="abs"></div>
</div>
</body></html>
